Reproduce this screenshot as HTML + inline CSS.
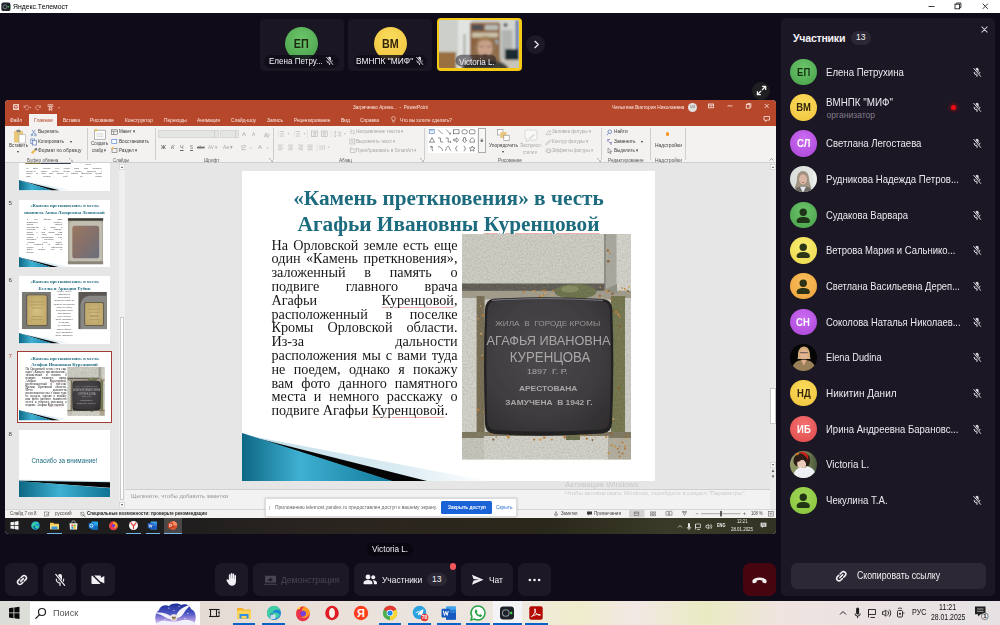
<!DOCTYPE html>
<html lang="ru">
<head>
<meta charset="utf-8">
<title>Яндекс.Телемост</title>
<style>
*{box-sizing:border-box;margin:0;padding:0}
html,body{width:1000px;height:625px;overflow:hidden;background:#0f0b19}
body{position:relative;font-family:"Liberation Sans",sans-serif;color:#fff;-webkit-font-smoothing:antialiased}
.abs{position:absolute}
/* window title bar */
#wtitle{position:absolute;left:0;top:0;width:1000px;height:13px;background:#fff;color:#000;font-size:8px;line-height:13px}
#wtitle .t{position:absolute;left:13px;top:0}
/* tiles */
.tile{position:absolute;top:18.5px;width:84px;height:52px;border-radius:4px;background:#1a1623;overflow:hidden}
.tile .av{position:absolute;left:25.5px;top:8px;width:33px;height:33px;border-radius:50%;font-weight:bold;font-size:12px;line-height:35px;text-align:center;color:#1d2a12}
.tile .lbl{position:absolute;left:4.5px;top:36px;width:75px;height:13px;border-radius:6.5px;background:rgba(16,12,24,.82);font-size:9px;line-height:13px;white-space:nowrap;color:#f1eff4}
.tile .lbl .sx{position:absolute;left:4.7px;top:0}
/* shared screen */
#share{position:absolute;left:5px;top:99.5px;width:771px;height:434.5px;border-radius:4px;overflow:hidden;background:#e6e6e6}
#share>*{filter:blur(.3px)}
/* panel */
#panel{position:absolute;left:781px;top:18px;width:214px;height:578px;border-radius:5px;background:#1b1724}
/* controls */
.cb{position:absolute;top:563px;height:33px;border-radius:7px;background:#1c1826}
/* taskbar */
#tb{position:absolute;left:0;top:600.5px;width:1000px;height:24.5px;background:linear-gradient(90deg,#dbded6 0%,#dcded8 3%,#e4dcd4 20%,#e8dfd8 30%,#ebe4de 42%,#efe9e2 52%,#efedcb 57.5%,#f2e8e4 63.5%,#e9ebc2 70.5%,#f0e4e0 78%,#ebe3e2 85%,#e6e2e4 100%)}

/* participants */
#panel h2{position:absolute;left:12px;top:12.5px;font-size:10.6px;font-weight:bold;line-height:14px;letter-spacing:-.25px;color:#f4f2f7}
#panel .cnt{position:absolute;left:70px;top:13px;width:19.5px;height:13.5px;border-radius:7px;background:#2c2735;font-size:8.6px;line-height:13.5px;text-align:center;color:#f1eff4}
.row{position:absolute;left:0;width:214px;height:27px}
.row .a{position:absolute;left:9.2px;top:0;width:26.5px;height:26.5px;border-radius:50%;font-weight:bold;font-size:11px;line-height:27.5px;text-align:center;overflow:hidden}
.row .a i{display:inline-block;font-style:normal;transform:scaleX(.86)}
.row .n{position:absolute;left:45.4px;top:7px;font-size:10.4px;line-height:14px;color:#ebe9ef;white-space:nowrap}
.row .n2{top:1.5px}
.row .s{position:absolute;left:45.4px;top:14.5px;font-size:8.6px;line-height:12px;color:#817c8b;white-space:nowrap}
.row svg.m{position:absolute;left:191px;top:8px;width:10px;height:11px}
.g1{background:radial-gradient(circle at 50% 35%,#6cc46a,#47a049)}
.y1{background:radial-gradient(circle at 50% 35%,#fbdc5e,#f0c23a)}
.p1{background:radial-gradient(circle at 50% 35%,#cc6cf2,#a945d8)}
.y2{background:radial-gradient(circle at 50% 35%,#f8ec72,#ecd84c)}
.o1{background:radial-gradient(circle at 50% 35%,#f9be5c,#eea23a)}
.r1{background:radial-gradient(circle at 50% 35%,#f47272,#e04848)}
.l1{background:radial-gradient(circle at 50% 35%,#a2d858,#86c23a)}
#copy{position:absolute;left:9.5px;top:545px;width:195.5px;height:26px;border-radius:6px;background:#2d2835;font-size:10px;line-height:26px;color:#f1eff4}

.cb svg{position:absolute}
.cb .tx{position:absolute;top:0;font-size:9.8px;line-height:33px;white-space:nowrap;display:inline-block;transform-origin:0 50%}
#tb .ic{position:absolute;top:3px;width:18px;height:18px}
#tb .ul{position:absolute;top:22.8px;height:1.7px;background:#0a64c8}
.sx{display:inline-block;transform-origin:0 50%;white-space:nowrap}
/*PPTCSS*/
#share{font-family:"Liberation Sans",sans-serif;color:#444}
#share .o{position:absolute;left:0;top:0;width:771px;height:26.1px;background:#b7472a}
#share .t{position:absolute;white-space:nowrap;transform-origin:0 50%}
#share .tab{color:#fbe9e4}
#share .rb{position:absolute;left:0;top:26.1px;width:771px;height:37.1px;background:#f3f2f1;border-bottom:.6px solid #d2d0ce}
#share .rt{color:#3b3a39}
#share .rg{color:#a9a7a5}
#share .gl{color:#5a5856}
#share .sep{position:absolute;top:28.5px;width:.6px;height:31.5px;background:#d0cecc}
#share .th{position:absolute;left:14.2px;width:91px;height:67.5px;background:#fff;overflow:hidden}
#share .th .in{position:absolute;left:0;top:0;width:413px;height:310.5px;transform:scale(.2203,.2174);transform-origin:0 0}
#share .num{position:absolute;left:3.5px;font-size:6.2px;line-height:8px;color:#3f3e3d}
.sl{position:absolute;background:#fff;overflow:hidden;font-family:"Liberation Serif",serif}
.sl .ti{position:absolute;left:0;width:413px;text-align:center;font-weight:bold;font-size:21.3px;line-height:26px;color:#1d6b7e;white-space:nowrap}
.sl .bd{position:absolute;font-size:14.2px;line-height:13.8px;color:#161616}
.sl .bd div{text-align:justify;text-align-last:justify;white-space:nowrap;height:13.8px}
.sl .bd div.l{text-align-last:left}
.sq{text-decoration:underline;text-decoration-color:#eeb0aa;text-decoration-thickness:.6px;text-underline-offset:1.5px}
#share .st{color:#484644}
/*ENDPPTCSS*/
</style>
</head>
<body>
<div id="wtitle"><svg style="position:absolute;left:1px;top:1.500px" width="10" height="10" viewBox="0 0 10 10"><rect x=".3" y=".5" width="9.200" height="8.600" rx="2.200" fill="#1d2228"/><circle cx="4" cy="4.800" r="2" fill="none" stroke="#9aa0a6" stroke-width=".7"/><circle cx="7.300" cy="4.800" r=".8" fill="#3ee04a"/></svg><span class="t"><span class="sx" style="transform:scaleX(.853)">Яндекс.Телемост</span></span><svg style="position:absolute;left:924px;top:0" width="70" height="13" viewBox="0 0 70 13"><g fill="none" stroke="#222" stroke-width=".9"><path d="M4.500 6.500h6"/><rect x="31" y="4.200" width="4.600" height="4.600"/><path d="M32.300 4.200V3h4.600v4.600h-1.300"/><path d="M58.700 3.700l5.200 5.200M63.900 3.700l-5.200 5.200"/></g></svg></div><!--endwt-->

<div class="tile" style="left:259.500px"><div class="av g1"><i style="display:inline-block;font-style:normal;transform:scaleX(.9)">ЕП</i></div><div class="lbl"><span class="sx" style="transform:scaleX(.895)">Елена Петру...</span><svg viewBox="0 0 10 11" width="9" height="10" style="position:absolute;right:5.200px;top:1.500px"><path d="M5 .8a1.6 1.6 0 0 1 1.6 1.6v2.7a1.6 1.6 0 0 1-3.2 0V2.400A1.600 1.600 0 0 1 5 .8z" fill="#e6e3ea"/><path d="M2 4.900a3 3 0 0 0 6 0M5 8v1.900" fill="none" stroke="#e6e3ea" stroke-width="1"/><path d="M1.300 1.300l7.600 8.600" stroke="#14101d" stroke-width="2.200"/><path d="M1.500 1.100l7.400 8.600" stroke="#e6e3ea" stroke-width="1"/></svg></div></div>
<div class="tile" style="left:348px"><div class="av y1" style="color:#33260a"><i style="display:inline-block;font-style:normal;transform:scaleX(.9)">ВМ</i></div><div class="lbl" style="left:6px;width:73px"><span class="sx" style="left:1.500px;transform:scaleX(.93)">ВМНПК "МИФ"</span><svg viewBox="0 0 10 11" width="9" height="10" style="position:absolute;right:3.500px;top:1.500px"><path d="M5 .8a1.6 1.6 0 0 1 1.6 1.6v2.7a1.6 1.6 0 0 1-3.2 0V2.400A1.600 1.600 0 0 1 5 .8z" fill="#e6e3ea"/><path d="M2 4.900a3 3 0 0 0 6 0M5 8v1.900" fill="none" stroke="#e6e3ea" stroke-width="1"/><path d="M1.300 1.300l7.600 8.600" stroke="#14101d" stroke-width="2.200"/><path d="M1.500 1.100l7.400 8.600" stroke="#e6e3ea" stroke-width="1"/></svg></div></div>
<div class="tile" id="vid" style="left:436.500px;top:17.800px;width:85px;height:52.800px;background:#f6c915"><svg style="position:absolute;left:2.400px;top:2.400px" width="80.200" height="48" viewBox="0 0 80.200 48"><defs><filter id="vb" x="-5%" y="-5%" width="110%" height="110%"><feGaussianBlur stdDeviation=".8"/></filter><clipPath id="vc"><rect width="80.200" height="48" rx="1.500"/></clipPath></defs>
<g clip-path="url(#vc)"><rect width="80.200" height="48" fill="#c9cbc6"/><g filter="url(#vb)">
<rect x="-2" y="-2" width="22" height="52" fill="#cdcfca"/><rect x="19" y="-2" width="13" height="52" fill="#e2e4e1"/><rect x="24" y="14" width="3" height="22" fill="#b9bcb8"/>
<rect x="-2" y="32" width="19" height="18" fill="#9a7040"/>
<rect x="31" y="3" width="30" height="34" fill="#8c613c"/><rect x="33" y="5" width="11" height="5" fill="#4a5058"/><rect x="46" y="5" width="13" height="5" fill="#b9bdb6"/><rect x="33" y="12.500" width="26" height="5" fill="#c8c0a8"/><rect x="48" y="20" width="11" height="5.500" fill="#9fb0b8"/><rect x="48" y="27.500" width="11" height="6" fill="#d8d4c8"/>
<rect x="61" y="-2" width="21" height="52" fill="#d3d5cf"/><rect x="62.500" y="10" width="11" height="29" fill="#b1b4b1"/><circle cx="66.500" cy="5" r="2" fill="#444a55"/><rect x="76.800" y="0" width="2.600" height="30" fill="#4a62a0"/>
<rect x="66" y="29" width="14" height="13" fill="#1f2a33"/><rect x="60" y="40" width="22" height="9" fill="#c9c4ba"/>
<path d="M33 50c-1.500-16 0-31 13-33.500 12.500-1 15.500 14 16 33.500z" fill="#8f6e4b"/>
<ellipse cx="46" cy="28" rx="7.600" ry="9.600" fill="#c9a28b"/>
<path d="M38 26c0-6 3.500-9.500 8-9.500s8 3.500 8 9.500c-1.500-4-3.500-5.500-8-5.500s-6.500 1.500-8 5.500z" fill="#a07c54"/>
<path d="M40 26.500h5M47.500 26.500h5" stroke="#6a5448" stroke-width=".8"/>
<ellipse cx="46" cy="35.500" rx="3" ry="1.600" fill="#7a4a44"/>
<path d="M22 50c1-7 9-9.500 24-9.500s22 2.500 24 9.500z" fill="#3f3f3b"/>
</g>
<rect x="16.500" y="34.800" width="41" height="11.800" rx="5.900" fill="#16121e" fill-opacity=".5"/>
</g></svg><div style="position:absolute;left:22.500px;top:37.800px;font-size:9px;line-height:12px;color:#f4f2f6;white-space:nowrap"><span class="sx" style="transform:scaleX(.9)">Victoria L.</span></div></div><!--endvid-->
<div class="abs" style="left:526.200px;top:35.200px;width:19px;height:19px;border-radius:50%;background:#1d1926"><svg viewBox="0 0 10 10" width="9" height="9" style="position:absolute;left:5.500px;top:5px"><path d="M3.300 1.500L7 5 3.300 8.500" fill="none" stroke="#e9e6ee" stroke-width="1.500" stroke-linecap="round" stroke-linejoin="round"/></svg></div>
<div class="abs" style="left:752px;top:81.500px;width:18px;height:18px;border-radius:50%;background:#1f1f21"><svg viewBox="0 0 12 12" width="11" height="11" style="position:absolute;left:3.500px;top:3.500px"><g fill="none" stroke="#f1f1f1" stroke-width="1.400" stroke-linecap="round" stroke-linejoin="round"><path d="M7.200 1.500h3.300v3.300M10.300 1.700L6.900 5.100M4.800 10.500H1.500V7.200M1.700 10.300l3.400-3.400"/></g></svg></div>
<div id="share"><div class="o"></div>
<svg style="position:absolute;left:7.500px;top:4px" width="50" height="7" viewBox="0 0 50 7"><g fill="none" stroke="#fbe9e4" stroke-width=".8"><rect x=".6" y=".6" width="5" height="5"/><path d="M1.800.6v2h2.600v-2M1.800 5.600v-1.600h2.600v1.600"/><path d="M11.500 3.200a2.200 2.200 0 1 1 1 2.300M11 1.400v2h2" stroke-opacity=".55"/><path d="M27 3.200a2.200 2.200 0 1 0-1 2.300M27.500 1.400v2h-2" stroke-opacity=".55"/><path d="M34.600.8h5.600M34.600 2.300h5.600M36 3.800h3M36.200 3.800v2.600l1.300-.8 1.300.8V3.800"/></g><path d="M16.500 3l1 1 1-1z M45 3.300l1 1.200 1-1.200z" fill="#fbe9e4" fill-opacity=".8"/></svg>
<div class="t tab" style="left:348px;top:4.89px;font-size:5.4px;line-height:7.02px;transform:scaleX(0.879);white-space:pre;">Загряченко Арина...  -  PowerPoint</div>
<div class="t tab" style="left:606.6px;top:4.59px;font-size:5.4px;line-height:7.02px;transform:scaleX(0.894);">Чепыгина Виктория Николаевна</div>
<div style="position:absolute;left:683px;top:3px;width:9px;height:9px;border-radius:50%;background:#e3e1e0;font-size:3.800px;line-height:9px;text-align:center;color:#777">ЧВ</div>
<svg style="position:absolute;left:701px;top:2.500px" width="66" height="22" viewBox="0 0 66 22"><g fill="none" stroke="#fbe9e4" stroke-width=".8"><rect x="2.500" y="2" width="5" height="3.800"/><path d="M2.500 3.200h5M4.300 4.300h1.400"/><path d="M21.500 3.900h5"/><rect x="40.300" y="2.600" width="3.600" height="3.600"/><path d="M41.300 2.600v-1h3.600v3.600h-1"/><path d="M58.700 2l4 4M62.700 2l-4 4"/><path d="M58 14.500h5.500v3.600h-2.600l-1.300 1.400v-1.400H58z"/></g></svg>
<div style="position:absolute;left:24px;top:14.600px;width:28px;height:11.700px;background:#f3f2f1"></div>
<div class="t tab" style="left:5.4px;top:17.46px;font-size:5.6px;line-height:7.28px;transform:scaleX(0.872);">Файл</div>
<div class="t tab" style="left:28.6px;top:17.46px;font-size:5.6px;line-height:7.28px;transform:scaleX(0.882);color:#b7472a;">Главная</div>
<div class="t tab" style="left:58px;top:17.46px;font-size:5.6px;line-height:7.28px;transform:scaleX(0.817);">Вставка</div>
<div class="t tab" style="left:85px;top:17.46px;font-size:5.6px;line-height:7.28px;transform:scaleX(0.851);">Рисование</div>
<div class="t tab" style="left:120px;top:17.46px;font-size:5.6px;line-height:7.28px;transform:scaleX(0.877);">Конструктор</div>
<div class="t tab" style="left:158.6px;top:17.46px;font-size:5.6px;line-height:7.28px;transform:scaleX(0.868);">Переходы</div>
<div class="t tab" style="left:192px;top:17.46px;font-size:5.6px;line-height:7.28px;transform:scaleX(0.875);">Анимация</div>
<div class="t tab" style="left:226px;top:17.46px;font-size:5.6px;line-height:7.28px;transform:scaleX(0.861);">Слайд-шоу</div>
<div class="t tab" style="left:262px;top:17.46px;font-size:5.6px;line-height:7.28px;transform:scaleX(0.871);">Запись</div>
<div class="t tab" style="left:288.6px;top:17.46px;font-size:5.6px;line-height:7.28px;transform:scaleX(0.842);">Рецензирование</div>
<div class="t tab" style="left:336px;top:17.46px;font-size:5.6px;line-height:7.28px;transform:scaleX(0.888);">Вид</div>
<div class="t tab" style="left:355px;top:17.46px;font-size:5.6px;line-height:7.28px;transform:scaleX(0.865);">Справка</div>
<div class="t tab" style="left:395px;top:17.46px;font-size:5.6px;line-height:7.28px;transform:scaleX(0.840);">Что вы хотите сделать?</div>
<svg style="position:absolute;left:385.5px;top:16.500px" width="5" height="7" viewBox="0 0 5 7"><path d="M2.500.5a1.900 1.900 0 0 1 1.100 3.400v1H1.400v-1A1.900 1.900 0 0 1 2.500.5zM1.600 6h1.800" fill="none" stroke="#fbe9e4" stroke-width=".6"/></svg>
<div class="rb"></div>
<div class="sep" style="left:82.4px"></div>
<div class="sep" style="left:149.6px"></div>
<div class="sep" style="left:268px"></div>
<div class="sep" style="left:419px"></div>
<div class="sep" style="left:596px"></div>
<div class="sep" style="left:645px"></div>
<div class="sep" style="left:680px"></div>
<svg style="position:absolute;left:8px;top:29.5px" width="14" height="15" viewBox="0 0 14 15"><rect x="1" y="2" width="9" height="11.500" rx=".8" fill="#eac877"/><rect x="3.500" y=".8" width="4" height="2.400" rx=".6" fill="#8a8886"/><path d="M6 5.500h6.500v8.700H6z" fill="#fff" stroke="#9a9896" stroke-width=".5"/></svg>
<div class="t rt" style="left:3.6px;top:42.59px;font-size:5.4px;line-height:7.02px;transform:scaleX(0.830);">Вставить</div>
<div class="t rt" style="left:11.5px;top:49.5px;font-size:4px;line-height:5px">▾</div>
<svg style="position:absolute;left:25px;top:29.0px" width="8" height="26" viewBox="0 0 8 26"><g fill="none" stroke="#5a7fb8" stroke-width=".7"><path d="M2 .8l3.400 4.600M5.400.8L2 5.400"/><circle cx="1.900" cy="6" r=".9"/><circle cx="5.500" cy="6" r=".9"/><rect x=".8" y="10" width="3.800" height="4.600"/><rect x="2.600" y="11.400" width="3.800" height="4.600" fill="#f3f2f1"/></g><path d="M1 23.500l3.200-3 1.500 1.400-3.200 3z" fill="#eab64a"/><path d="M4.400 20.300l1.700-1.500 1.400 1.400-1.600 1.600z" fill="#666"/></svg>
<div class="t rt" style="left:33px;top:28.99px;font-size:5.4px;line-height:7.02px;transform:scaleX(0.858);">Вырезать</div>
<div class="t rt" style="left:33px;top:38.39px;font-size:5.4px;line-height:7.02px;transform:scaleX(0.894);">Копировать</div>
<div class="t rt" style="left:33px;top:47.39px;font-size:5.4px;line-height:7.02px;transform:scaleX(0.900);">Формат по образцу</div>
<div class="t rt" style="left:65px;top:39.5px;font-size:4px;line-height:5px">▾</div>
<div class="t gl" style="left:22px;top:57.12px;font-size:5.2px;line-height:6.76px;transform:scaleX(0.889);">Буфер обмена</div>
<svg style="position:absolute;left:88.5px;top:29.0px" width="12" height="11" viewBox="0 0 12 11"><rect x=".6" y="1.200" width="10.800" height="9" fill="#fff" stroke="#8a8886" stroke-width=".6"/><rect x=".6" y="0" width="3" height="2.400" fill="#eac877"/><path d="M2.400 4.400h7.200M2.400 6h7.200M2.400 7.600h7.200" stroke="#c8c6c4" stroke-width=".6"/></svg>
<div class="t rt" style="left:86.4px;top:40.59px;font-size:5.4px;line-height:7.02px;transform:scaleX(0.838);">Создать</div>
<div class="t rt" style="left:87.4px;top:47.99px;font-size:5.4px;line-height:7.02px;transform:scaleX(0.739);">слайд ▾</div>
<svg style="position:absolute;left:106px;top:29.0px" width="7" height="26" viewBox="0 0 7 26"><g fill="none" stroke="#6a6866" stroke-width=".6"><rect x=".5" y=".8" width="5.800" height="4.600"/><path d="M.5 2.300h5.800M2.600 2.300v3.100"/><rect x=".8" y="10.300" width="5" height="4" fill="#fff" stroke="#3c78c8"/><rect x="1" y="19.300" width="5" height="4.300"/></g><rect x=".5" y="18.400" width="2.400" height="1.800" fill="#eab64a"/></svg>
<div class="t rt" style="left:114px;top:28.99px;font-size:5.4px;line-height:7.02px;transform:scaleX(0.835);">Макет ▾</div>
<div class="t rt" style="left:114px;top:38.39px;font-size:5.4px;line-height:7.02px;transform:scaleX(0.868);">Восстановить</div>
<div class="t rt" style="left:114px;top:47.39px;font-size:5.4px;line-height:7.02px;transform:scaleX(0.829);">Раздел ▾</div>
<div class="t gl" style="left:108.4px;top:57.12px;font-size:5.2px;line-height:6.76px;transform:scaleX(0.837);">Слайды</div>
<div style="position:absolute;left:153.4px;top:30.9px;width:60.600px;height:8px;background:#e4e6e3;border:.5px solid #d6d6d4"></div>
<div style="position:absolute;left:215px;top:30.9px;width:19px;height:8px;background:#e4e6e3;border:.5px solid #d6d6d4"></div>
<div style="position:absolute;left:208.5px;top:30.9px;width:.5px;height:8px;background:#cfcfcd"></div><div style="position:absolute;left:229.5px;top:30.9px;width:.5px;height:8px;background:#cfcfcd"></div>
<div class="t rg" style="left:237px;top:31.73px;font-size:5.8px;line-height:7.54px;transform:scaleX(1.034);">A</div>
<div class="t rg" style="left:247.4px;top:32.78px;font-size:4.8px;line-height:6.24px;transform:scaleX(0.999);">A</div>
<svg style="position:absolute;left:257.5px;top:32.0px" width="7" height="7" viewBox="0 0 7 7"><path d="M1 5.500L3 1l2 4.500M1.700 4h2.600M4.600 1.200l1.800 1.800-2.500 2.500" fill="none" stroke="#a9a7a5" stroke-width=".6"/></svg>
<div class="t rt" style="left:155.6px;top:44.26px;font-size:5.6px;line-height:7.28px;font-weight:bold;transform:scaleX(0.948);color:#6e6c6a;">Ж</div>
<div class="t rt" style="left:165.6px;top:44.26px;font-size:5.6px;line-height:7.28px;transform:scaleX(1.042);font-style:italic;color:#6e6c6a;">К</div>
<div class="t rt" style="left:175px;top:44.26px;font-size:5.6px;line-height:7.28px;transform:scaleX(0.965);text-decoration:underline;color:#6e6c6a;">Ч</div>
<div class="t rt" style="left:185px;top:44.26px;font-size:5.6px;line-height:7.28px;transform:scaleX(0.803);text-decoration:underline;color:#6e6c6a;">S</div>
<div class="t rt" style="left:192.4px;top:44.26px;font-size:5.6px;line-height:7.28px;transform:scaleX(0.842);text-decoration:line-through;color:#6e6c6a;">abc</div>
<div class="t rg" style="left:202.6px;top:44.92px;font-size:5.2px;line-height:6.76px;transform:scaleX(0.874);">AV ▾</div>
<div class="t rg" style="left:217.6px;top:44.66px;font-size:5.6px;line-height:7.28px;transform:scaleX(0.873);">Aa ▾</div>
<svg style="position:absolute;left:235px;top:44.5px" width="36" height="7" viewBox="0 0 36 7"><path d="M1.500 2l3.500-1 .8 1.500-3.300 2.200zM1 5.800h5" fill="none" stroke="#a9a7a5" stroke-width=".6"/><path d="M9.600 3.400l1 1.200 1-1.200zM26.600 3.400l1 1.200 1-1.200z" fill="#a9a7a5"/></svg>
<div class="t rg" style="left:253.4px;top:44.40px;font-size:6px;line-height:7.8px;transform:scaleX(0.999);">A</div>
<div class="t gl" style="left:198.6px;top:57.12px;font-size:5.2px;line-height:6.76px;transform:scaleX(0.900);">Шрифт</div>
<svg style="position:absolute;left:272px;top:30.5px" width="74" height="24" viewBox="0 0 74 24"><g stroke="#b4b2b0" stroke-width=".6" fill="none"><path d="M3 1.500h4M3 3.800h4M3 6.100h4M1.200 1.500h.8M1.200 3.800h.8M1.200 6.100h.8"/><path d="M19 1.500h4M19 3.800h4M19 6.100h4M17.200 1.500h.8M17.200 3.800h.8M17.200 6.100h.8"/><rect x="34.600" y="1" width="5.600" height="5.400"/><path d="M36.200 2.500h3M36.200 3.800h3M36.200 5.100h3"/><rect x="44.600" y="1" width="5.600" height="5.400"/><path d="M45.800 2.500h3M45.800 3.800h3M45.800 5.100h3"/><path d="M58.200 1.200v5.600M57 2.400l1.200-1.200 1.200 1.200M57 5.600l1.200 1.200 1.200-1.200M61 2.200h3.400M61 4h3.400M61 5.800h3.400"/><path d="M1.200 15h5M1.200 16.600h3.600M1.200 18.200h5M1.200 19.800h3.600"/><path d="M11 15h5M11.700 16.600h3.600M11 18.200h5M11.700 19.800h3.600"/><path d="M21 15h5M22.400 16.600h3.600M21 18.200h5M22.400 19.800h3.600"/><path d="M30.600 15h5M30.600 16.600h5M30.600 18.200h5M30.600 19.800h5"/><path d="M43 15v5M45.200 15v5M47.400 15v5"/></g><g fill="#b4b2b0"><path d="M10.500 3.300l1 1.200 1-1.200zM26.500 3.300l1 1.200 1-1.200zM66.800 3.300l1 1.200 1-1.200zM50.600 16.800l1 1.200 1-1.200z"/></g><path d="M30.400 0v8M54.200 0v8M40 13.500v8" stroke="#d8d6d4" stroke-width=".5"/></svg>
<svg style="position:absolute;left:343.5px;top:29.5px" width="7" height="25" viewBox="0 0 7 25"><g fill="none" stroke="#b4b2b0" stroke-width=".6"><path d="M1 1h2.400M1 2.600h2.400M1 4.200h2.400M5 .8v4.400M4.200 4.400l.8.900.8-.9"/><rect x=".8" y="10" width="5" height="5"/><path d="M2 11.600h2.600M2 13.200h2.600"/><rect x="1.200" y="20" width="4.800" height="3.600"/><path d="M.6 19h2.600"/></g></svg>
<div class="t rg" style="left:351px;top:28.99px;font-size:5.4px;line-height:7.02px;transform:scaleX(0.864);">Направление текста ▾</div>
<div class="t rg" style="left:351px;top:38.39px;font-size:5.4px;line-height:7.02px;transform:scaleX(0.861);">Выровнять текст ▾</div>
<div class="t rg" style="left:351px;top:47.39px;font-size:5.4px;line-height:7.02px;transform:scaleX(0.873);">Преобразовать в SmartArt ▾</div>
<div class="t gl" style="left:334px;top:57.12px;font-size:5.2px;line-height:6.76px;transform:scaleX(0.891);">Абзац</div>
<div style="position:absolute;left:423.4px;top:28.9px;width:48.600px;height:24.600px;background:#fff"></div>
<div style="position:absolute;left:472.6px;top:28.9px;width:8.800px;height:24.600px;background:#f6f6f5;border:.5px solid #aeacaa"></div>
<svg style="position:absolute;left:423.4px;top:28.9px" width="58" height="25" viewBox="0 0 58 25"><g fill="none" stroke="#4a4846" stroke-width=".6"><rect x="1.200" y="1.500" width="5" height="4" stroke="#3a6ec0"/><path d="M2.200 2.800h3" stroke="#3a6ec0"/><path d="M10 1.500l4.600 4.600M18 1.500l4.600 4.600M22.600 6.100v-1.400M22.600 6.100h-1.400"/><rect x="25.400" y="1.800" width="5.600" height="4"/><ellipse cx="36.600" cy="3.800" rx="2.800" ry="2.200"/><rect x="41.400" y="1.800" width="5.600" height="4" rx="1"/><path d="M4 9.600l2.600 4.600H1.400z"/><path d="M10 10h2.600v4h2.600M17.600 10h2.600v4h2.600M22 13.200l.9.800-.9.800"/><path d="M25.600 11.200h2.800v-1.400l2.400 2.200-2.400 2.200v-1.400h-2.800z"/><path d="M35.600 9.600h2v2.600h1.300l-2.300 2.400-2.300-2.400h1.300z"/><path d="M42 14.200v-2.600l2.200-2 2.200 2v2.600z"/><path d="M2.600 18.200l2 .6-.6 2 .8 2.400M2.600 18.200l.6 2"/><path d="M10 18.600c2.600 0 4.600 2 4.600 4.400M17.400 22.800c1.200-4 2-4.600 2.800-4.600s1.600 4.600 3 4.600"/><path d="M29.400 18.200c-1 0-1.200.6-1.200 1.200s.2 1-.8 1.200c1 .2.800.6.800 1.200s.2 1.200 1.200 1.200M35.600 18.200c1 0 1.200.6 1.200 1.200s-.2 1 .8 1.200c-1 .2-.8.600-.8 1.200s-.2 1.200-1.200 1.200"/><path d="M44.200 18l.8 1.800 2 .2-1.500 1.300.5 1.900-1.800-1-1.800 1 .5-1.900-1.500-1.300 2-.2z"/></g><path d="M52.600 11.200h2.400M52.600 12.600l1.200 1.400 1.200-1.400z" stroke="#4a4846" stroke-width=".5" fill="#4a4846"/></svg>
<svg style="position:absolute;left:492px;top:29.0px" width="13" height="12" viewBox="0 0 13 12"><rect x=".6" y=".6" width="5.400" height="5.400" fill="#fff" stroke="#8a8886" stroke-width=".6"/><rect x="3.400" y="3" width="6" height="6" fill="#eac877"/><rect x="6.800" y="6.200" width="5.400" height="5.400" fill="#fff" stroke="#8a8886" stroke-width=".6"/></svg>
<div class="t rt" style="left:484px;top:42.59px;font-size:5.4px;line-height:7.02px;transform:scaleX(0.902);">Упорядочить</div>
<div class="t rt" style="left:497px;top:49.5px;font-size:4px;line-height:5px">▾</div>
<svg style="position:absolute;left:519px;top:29.0px" width="14" height="13" viewBox="0 0 14 13"><path d="M3 1h8a2 2 0 0 1 2 2v6a2 2 0 0 1-2 2H6l-4 1.500L3 10a2 2 0 0 1-2-2V3a2 2 0 0 1 2-2z" fill="#f8f8f7" stroke="#c8c6c4" stroke-width=".6"/><path d="M5 9l5-4 .8 1-5 4-1.600.6z" fill="#d6d4d2"/></svg>
<div class="t rg" style="left:515px;top:42.59px;font-size:5.4px;line-height:7.02px;transform:scaleX(0.891);">Экспресс-</div>
<div class="t rg" style="left:518.4px;top:49.39px;font-size:5.4px;line-height:7.02px;transform:scaleX(0.764);">стили ▾</div>
<svg style="position:absolute;left:540px;top:29.0px" width="7" height="25" viewBox="0 0 7 25"><g fill="none" stroke="#b4b2b0" stroke-width=".6"><path d="M1 5.600l2.500-4 2.500 4zM5 1l1 1.600"/><path d="M1 14.500l4.400-3.600.8.900-4.400 3.600-1.200.3z"/><ellipse cx="3.400" cy="21.600" rx="2.600" ry="2"/><ellipse cx="4" cy="22.200" rx="2" ry="1.400"/></g></svg>
<div class="t rg" style="left:547.4px;top:28.99px;font-size:5.4px;line-height:7.02px;transform:scaleX(0.868);">Заливка фигуры ▾</div>
<div class="t rg" style="left:547.4px;top:38.39px;font-size:5.4px;line-height:7.02px;transform:scaleX(0.868);">Контур фигуры ▾</div>
<div class="t rg" style="left:547.4px;top:47.39px;font-size:5.4px;line-height:7.02px;transform:scaleX(0.843);">Эффекты фигуры ▾</div>
<div class="t gl" style="left:493px;top:57.12px;font-size:5.2px;line-height:6.76px;transform:scaleX(0.916);">Рисование</div>
<svg style="position:absolute;left:601px;top:29.0px" width="7" height="25" viewBox="0 0 7 25"><g fill="none" stroke="#4a6fb0" stroke-width=".7"><circle cx="3.800" cy="2.800" r="1.800"/><path d="M2.500 4.200L.8 6.200"/><path d="M1 10.600h3M1 12h2M3 13.600h3M4 15h2" stroke="#6a5fa8"/><path d="M2 19l0 5 1.300-1.200 1 2 .8-.4-1-2h1.700z" stroke="#5a5856" stroke-width=".5"/></g></svg>
<div class="t rt" style="left:609px;top:28.99px;font-size:5.4px;line-height:7.02px;transform:scaleX(0.883);">Найти</div>
<div class="t rt" style="left:609px;top:38.39px;font-size:5.4px;line-height:7.02px;transform:scaleX(0.890);">Заменить</div>
<div class="t rt" style="left:609px;top:47.39px;font-size:5.4px;line-height:7.02px;transform:scaleX(0.840);">Выделить ▾</div>
<div class="t rt" style="left:636px;top:39.5px;font-size:4px;line-height:5px">▾</div>
<div class="t gl" style="left:603.4px;top:57.12px;font-size:5.2px;line-height:6.76px;transform:scaleX(0.899);">Редактирование</div>
<div style="position:absolute;left:660.8px;top:32.7px;width:3.600px;height:3.600px;border-radius:50%;background:#f7941d"></div>
<div class="t rt" style="left:650px;top:42.59px;font-size:5.4px;line-height:7.02px;transform:scaleX(0.911);">Надстройки</div>
<div class="t gl" style="left:650px;top:57.12px;font-size:5.2px;line-height:6.76px;transform:scaleX(0.946);">Надстройки</div>
<svg style="position:absolute;left:63.5px;top:58.0px" width="4" height="4" viewBox="0 0 4 4"><path d="M.4 1.600V.4h1.200M1.600 1.600l2 2M3.600 2.200v1.400H2.200" fill="none" stroke="#8a8886" stroke-width=".5"/></svg>
<svg style="position:absolute;left:263.5px;top:58.0px" width="4" height="4" viewBox="0 0 4 4"><path d="M.4 1.600V.4h1.200M1.600 1.600l2 2M3.600 2.200v1.400H2.200" fill="none" stroke="#8a8886" stroke-width=".5"/></svg>
<svg style="position:absolute;left:414.5px;top:58.0px" width="4" height="4" viewBox="0 0 4 4"><path d="M.4 1.600V.4h1.200M1.600 1.600l2 2M3.600 2.200v1.400H2.200" fill="none" stroke="#8a8886" stroke-width=".5"/></svg>
<svg style="position:absolute;left:592px;top:58.0px" width="4" height="4" viewBox="0 0 4 4"><path d="M.4 1.600V.4h1.200M1.600 1.600l2 2M3.600 2.200v1.400H2.200" fill="none" stroke="#8a8886" stroke-width=".5"/></svg>
<svg style="position:absolute;left:763.5px;top:58.3px" width="5" height="3" viewBox="0 0 5 3"><path d="M.5 2.500l2-2 2 2" fill="none" stroke="#6a6866" stroke-width=".6"/></svg>
<div style="position:absolute;left:113.500px;top:63.200px;width:6.500px;height:346.500px;background:#efefef"></div>
<div style="position:absolute;left:114.700px;top:217.5px;width:4.600px;height:183px;background:#fff;border:.5px solid #c9c9c9"></div>
<svg style="position:absolute;left:113.6px;top:64.1px" width="6" height="6" viewBox="0 0 6 6"><rect x=".3" y=".3" width="5.400" height="5.400" fill="#fff" stroke="#b9b9b9" stroke-width=".5"/><path d="M1.800 3.700L3 2.300l1.200 1.400z" fill="#333"/></svg>
<svg style="position:absolute;left:113.6px;top:402.8px" width="6" height="6" viewBox="0 0 6 6"><rect x=".3" y=".3" width="5.400" height="5.400" fill="#fff" stroke="#b9b9b9" stroke-width=".5"/><path d="M1.800 2.300L3 3.700l1.200-1.400z" fill="#333"/></svg>
<div style="position:absolute;left:0;top:63.200px;width:113.500px;height:346.500px;background:#e6e6e6;overflow:hidden">
<div class="th sl" style="top:-39.7px"><div class="in"><div style="position:absolute;left:30px;top:170px;width:205px;height:18px;background:#1a2340"></div><div style="position:absolute;left:30px;top:170px;width:70px;height:18px;background:#8c7a3a"></div><div class="bd" style="left:250px;top:176px;width:130px;font-size:7.4px;line-height:8.5px;color:#111"><div style="height:8.5px;text-align:center;text-align-last:center">для возложения и для</div><div style="height:8.5px;text-align:center;text-align-last:center">галереи.</div></div><div class="bd" style="left:32px;top:204px;width:345px;font-size:7.6px;line-height:11.5px;color:#111"><div style="height:11.5px;">Тот камень установлен перед каждым домом, жизнь вписывается,</div><div style="height:11.5px;">используется гравюра латунная богемия пластина, вмещающая в</div><div style="height:11.5px;">гранитик так имена жизнь записаны и любимый общеизвестная подлинно</div><div style="height:11.5px;">домов, контактам погиб или сохранна.</div></div><svg style="position:absolute;left:0;top:262.0px" width="413" height="48.5" viewBox="0 0 413 48.5" preserveAspectRatio="none">
<defs><linearGradient id="sgt4" x1="0" x2="1" y1="0" y2="0"><stop offset="0" stop-color="#0d6784"/><stop offset=".38" stop-color="#3fb0d2"/><stop offset="1" stop-color="#12799a"/></linearGradient>
<linearGradient id="lgt4" x1="0" x2="1" y1="0" y2="0"><stop offset="0" stop-color="#c3dfea"/><stop offset=".6" stop-color="#d9ebf2"/><stop offset="1" stop-color="#ffffff"/></linearGradient></defs>
<path d="M10 3.200L248 48.500H150z" fill="url(#lgt4)"/>
<path d="M14 5L187 48.500H150z" fill="#050505"/>
<path d="M0 0L152 48.500H0z" fill="url(#sgt4)"/>
</svg></div></div>
<div class="num" style="top:36.3px">5</div><div class="th sl" style="top:37.3px"><div class="in"><div class="ti" style="top:12px">«Камень преткновения» в честь</div><div class="ti" style="top:43px;font-size:20.700px">пианиста Анны Лазаревны Левинской</div><div class="bd" style="left:35px;top:86px;width:161px;font-size:8.8px;line-height:11.4px;color:#111"><div style="height:11.4px;">У этих обычных домов</div><div style="height:11.4px;">вспоминаний «Камень»,</div><div style="height:11.4px;">жизнью «Камень</div><div style="height:11.4px;">преткновения» в память о</div><div style="height:11.4px;">Левинской Анне Лазаревне,</div><div style="height:11.4px;">которая в 1874 прожив этом</div><div style="height:11.4px;">районом улице, создания</div><div style="height:11.4px;">прошла в консерватории. Была</div><div style="height:11.4px;">арестована. Левинскую с</div><div style="height:11.4px;">Гулярной гетто, позднее</div><div style="height:11.4px;">её Литовскую на поблизи</div><div style="height:11.4px;">рудники и собственным</div><div style="height:11.4px;">хозяин которых они не</div><div style="height:11.4px;">брились.</div></div><svg style="position:absolute;left:222px;top:84px" width="160" height="212" viewBox="0 0 160 212"><defs><filter id="s5"><feGaussianBlur stdDeviation="3"/></filter><linearGradient id="s5g" x1="0" y1="0" x2="1" y2="1"><stop offset="0" stop-color="#9a7660"/><stop offset=".5" stop-color="#85706a"/><stop offset="1" stop-color="#69707e"/></linearGradient></defs><rect width="160" height="212" fill="#aeaa9e"/><g filter="url(#s5)"><rect x="-5" y="-5" width="170" height="16" fill="#3a3a30"/><rect x="8" y="14" width="146" height="186" rx="16" fill="#c2beb2"/><rect x="20" y="34" width="122" height="150" rx="12" fill="url(#s5g)"/><rect x="-5" y="198" width="170" height="20" fill="#8a867a"/></g></svg><svg style="position:absolute;left:0;top:262.0px" width="413" height="48.5" viewBox="0 0 413 48.5" preserveAspectRatio="none">
<defs><linearGradient id="sgt5" x1="0" x2="1" y1="0" y2="0"><stop offset="0" stop-color="#0d6784"/><stop offset=".38" stop-color="#3fb0d2"/><stop offset="1" stop-color="#12799a"/></linearGradient>
<linearGradient id="lgt5" x1="0" x2="1" y1="0" y2="0"><stop offset="0" stop-color="#c3dfea"/><stop offset=".6" stop-color="#d9ebf2"/><stop offset="1" stop-color="#ffffff"/></linearGradient></defs>
<path d="M10 3.200L248 48.500H150z" fill="url(#lgt5)"/>
<path d="M14 5L187 48.500H150z" fill="#050505"/>
<path d="M0 0L152 48.500H0z" fill="url(#sgt5)"/>
</svg></div></div>
<div class="num" style="top:113.3px">6</div><div class="th sl" style="top:113.8px"><div class="in"><div class="ti" style="top:12px">«Камень преткновения» в честь</div><div class="ti" style="top:43px">Беллы и Аркадия Рубин</div><svg style="position:absolute;left:13px;top:73px" width="132" height="172" viewBox="0 0 132 172"><defs><filter id="s6a"><feGaussianBlur stdDeviation="2.500"/></filter><radialGradient id="s6ag"><stop offset="0" stop-color="#d6c082"/><stop offset="1" stop-color="#c2aa6a"/></radialGradient></defs><rect width="132" height="172" fill="#7b7973"/><g filter="url(#s6a)"><rect x="21" y="13" width="95" height="144" rx="9" fill="#4a4742"/><rect x="24" y="16" width="89" height="138" rx="7" fill="url(#s6ag)"/><path d="M38 46h61M38 60h61M44 74h49M46 114h45M42 128h53" stroke="#a08c56" stroke-width="4" fill="none" opacity=".7"/></g></svg><svg style="position:absolute;left:269px;top:73px" width="130" height="172" viewBox="0 0 130 172"><defs><filter id="s6b"><feGaussianBlur stdDeviation="2.500"/></filter><radialGradient id="s6bg"><stop offset="0" stop-color="#d2bc80"/><stop offset="1" stop-color="#bfa86c"/></radialGradient></defs><rect width="130" height="172" fill="#5a5753"/><g filter="url(#s6b)"><path d="M10 172V60Q14 22 50 18H130V172z" fill="#8a8884"/><rect x="28" y="47" width="88" height="110" rx="9" fill="#4a4742"/><rect x="31" y="50" width="82" height="104" rx="7" fill="url(#s6bg)"/><path d="M45 80h54M45 94h54M51 108h42M53 114h38M49 128h46" stroke="#a08c56" stroke-width="4" fill="none" opacity=".7"/></g></svg><div class="bd" style="left:146px;top:64px;width:118px;font-size:9.2px;line-height:14.4px;color:#111"><div style="height:14.4px;text-align:center;text-align-last:center">Следует, что и её</div><div style="height:14.4px;text-align:center;text-align-last:center">проживали во</div><div style="height:14.4px;text-align:center;text-align-last:center">преткновения,</div><div style="height:14.4px;text-align:center;text-align-last:center">заложенные памяти во</div><div style="height:14.4px;text-align:center;text-align-last:center">время всё преткновения</div><div style="height:14.4px;text-align:center;text-align-last:center">плитой от Рубина,</div><div style="height:14.4px;text-align:center;text-align-last:center">в следствии тройка</div><div style="height:14.4px;text-align:center;text-align-last:center">своих Иванной</div><div style="height:14.4px;text-align:center;text-align-last:center">Отдел пыльной</div><div style="height:14.4px;text-align:center;text-align-last:center">войны. Проживших</div><div style="height:14.4px;text-align:center;text-align-last:center">в этом доме,</div><div style="height:14.4px;text-align:center;text-align-last:center">где установлен</div><div style="height:14.4px;text-align:center;text-align-last:center">камень Рубиных.</div><div style="height:14.4px;text-align:center;text-align-last:center">Отдел Московский</div><div style="height:14.4px;text-align:center;text-align-last:center">войны. Проживших.</div></div><svg style="position:absolute;left:0;top:262.0px" width="413" height="48.5" viewBox="0 0 413 48.5" preserveAspectRatio="none">
<defs><linearGradient id="sgt6" x1="0" x2="1" y1="0" y2="0"><stop offset="0" stop-color="#0d6784"/><stop offset=".38" stop-color="#3fb0d2"/><stop offset="1" stop-color="#12799a"/></linearGradient>
<linearGradient id="lgt6" x1="0" x2="1" y1="0" y2="0"><stop offset="0" stop-color="#c3dfea"/><stop offset=".6" stop-color="#d9ebf2"/><stop offset="1" stop-color="#ffffff"/></linearGradient></defs>
<path d="M10 3.200L248 48.500H150z" fill="url(#lgt6)"/>
<path d="M14 5L187 48.500H150z" fill="#050505"/>
<path d="M0 0L152 48.500H0z" fill="url(#sgt6)"/>
</svg></div></div>
<div class="num" style="top:189.3px;color:#b7472a">7</div><div style="position:absolute;left:12.400px;top:188.7px;width:94.600px;height:71.200px;border:1px solid #a33a34;background:#fff"></div><div class="th sl" style="top:190.5px"><div class="in"><div class="ti" style="top:14px">«Камень преткновения» в честь</div><div class="ti" style="top:40px">Агафьи Ивановны <span class="sq">Куренцовой</span></div><div class="bd" style="left:29.500px;top:68.200px;width:186px"><div>На Орловской земле есть еще</div><div>один «Камень преткновения»,</div><div>заложенный в память о</div><div>подвиге главного врача</div><div>Агафьи <span class="sq">Куренцовой</span>,</div><div>расположенный в поселке</div><div>Кромы Орловской области.</div><div>Из-за дальности</div><div>расположения мы с вами туда</div><div>не поедем, однако я покажу</div><div>вам фото данного памятного</div><div>места и немного расскажу о</div><div class="l">подвиге Агафьи <span class="sq">Куренцовой</span>.</div></div><svg style="position:absolute;left:220px;top:63.500px" width="169" height="225.500" viewBox="0 0 169 225.500">
<defs><filter id="pbm" x="-5%" y="-5%" width="110%" height="110%"><feGaussianBlur stdDeviation=".7"/></filter><filter id="pb2m"><feGaussianBlur stdDeviation=".45"/></filter>
<filter id="pnm" x="0" y="0" width="100%" height="100%"><feTurbulence type="fractalNoise" baseFrequency=".6" numOctaves="2" seed="4"/><feColorMatrix values="0 0 0 0 .3  0 0 0 0 .3  0 0 0 0 .27  .9 .9 .9 0 -1.150"/></filter>
<radialGradient id="plm" cx=".45" cy=".4" r=".75"><stop offset="0" stop-color="#4c494c"/><stop offset=".6" stop-color="#403d40"/><stop offset="1" stop-color="#302e30"/></radialGradient>
<clipPath id="pcm"><rect width="169" height="225.500"/></clipPath></defs>
<g clip-path="url(#pcm)">
<rect width="169" height="225.500" fill="#cdcdc4"/>
<g filter="url(#pbm)">
<rect x="-4" y="-4" width="148" height="56" fill="#cecec5"/>
<rect x="142" y="-4" width="13" height="64" fill="#a9a99f"/><rect x="142" y="-4" width="2" height="60" fill="#8e8e84"/>
<rect x="154.500" y="-4" width="20" height="62" fill="#d4d4cc"/>
<rect x="-4" y="49.500" width="146.500" height="7.800" fill="#5b5951"/>
<rect x="-4" y="56.800" width="180" height="8.500" fill="#a29c8b"/>
<path d="M142 56l13-6v10z" fill="#8f8f82"/>
<rect x="-4" y="64" width="19" height="140" fill="#d3d3cb"/>
<rect x="14.600" y="62" width="8" height="142" fill="#74694f"/>
<rect x="149" y="62" width="14.500" height="142" fill="#70734a"/>
<rect x="163" y="64" width="10" height="140" fill="#cfcfc7"/>
<ellipse cx="113.500" cy="57.500" rx="21" ry="7.500" fill="#6b6f47"/><ellipse cx="108" cy="55" rx="9" ry="3.500" fill="#858a5c"/>
<rect x="-4" y="198" width="180" height="9" fill="#7d745c"/>
<rect x="-4" y="204" width="27" height="24" fill="#c6c6bd"/>
<rect x="22" y="202" width="124.500" height="26" fill="#d2d2ca"/>
<rect x="146" y="204" width="26" height="24" fill="#b3ae9d"/>
<rect x="104" y="198" width="14" height="8" fill="#6a6d49"/>
<circle cx="72.3" cy="57.1" r="1.1" fill="#c98a3e"/><circle cx="91.2" cy="56.7" r="1.0" fill="#b8742e"/><circle cx="61.4" cy="59.0" r="0.6" fill="#c98a3e"/><circle cx="80.9" cy="56.4" r="1.0" fill="#b8742e"/><circle cx="84.0" cy="60.1" r="0.6" fill="#8a5a2a"/><circle cx="61.9" cy="57.5" r="1.0" fill="#b8742e"/><circle cx="71.0" cy="57.0" r="0.7" fill="#d9a455"/><circle cx="81.3" cy="60.8" r="0.7" fill="#b8742e"/><circle cx="74.2" cy="59.8" r="0.6" fill="#c98a3e"/><circle cx="83.5" cy="59.5" r="1.0" fill="#d9a455"/><circle cx="77.7" cy="62.5" r="0.9" fill="#b8742e"/><circle cx="90.2" cy="60.9" r="0.8" fill="#d9a455"/><circle cx="80.0" cy="62.1" r="1.1" fill="#d9a455"/><circle cx="83.1" cy="56.5" r="1.0" fill="#b8742e"/><circle cx="160.2" cy="54.1" r="0.9" fill="#c98a3e"/><circle cx="166.8" cy="53.1" r="1.0" fill="#d9a455"/><circle cx="146.9" cy="56.9" r="0.9" fill="#8a5a2a"/><circle cx="138.2" cy="53.3" r="0.8" fill="#c98a3e"/><circle cx="137.9" cy="61.8" r="1.1" fill="#8a5a2a"/><circle cx="145.1" cy="57.4" r="1.1" fill="#c98a3e"/><circle cx="166.1" cy="57.0" r="1.0" fill="#8a5a2a"/><circle cx="137.9" cy="62.8" r="0.7" fill="#b8742e"/><circle cx="148.7" cy="64.8" r="0.9" fill="#b8742e"/><circle cx="150.4" cy="59.7" r="1.2" fill="#8a5a2a"/><circle cx="163.6" cy="55.9" r="0.9" fill="#d9a455"/><circle cx="157.8" cy="57.3" r="0.8" fill="#c98a3e"/><circle cx="141.6" cy="55.2" r="0.8" fill="#8a5a2a"/><circle cx="162.6" cy="54.6" r="0.8" fill="#b8742e"/><circle cx="145.9" cy="16.1" r="1.0" fill="#b8742e"/><circle cx="147.8" cy="19.3" r="1.0" fill="#c98a3e"/><circle cx="146.2" cy="27.2" r="1.3" fill="#8a5a2a"/><circle cx="145.8" cy="16.7" r="0.9" fill="#8a5a2a"/><circle cx="28.1" cy="199.5" r="0.7" fill="#b8742e"/><circle cx="34.3" cy="203.2" r="0.7" fill="#b8742e"/><circle cx="89.8" cy="205.6" r="1.0" fill="#c98a3e"/><circle cx="133.7" cy="203.3" r="0.7" fill="#d9a455"/><circle cx="144.2" cy="203.2" r="0.9" fill="#c98a3e"/><circle cx="130.4" cy="206.0" r="0.9" fill="#8a5a2a"/><circle cx="60.5" cy="200.0" r="1.1" fill="#d9a455"/><circle cx="82.2" cy="203.8" r="1.0" fill="#b8742e"/><circle cx="143.6" cy="202.7" r="0.7" fill="#c98a3e"/><circle cx="118.6" cy="201.1" r="1.1" fill="#c98a3e"/><circle cx="110.5" cy="200.8" r="0.9" fill="#b8742e"/><circle cx="66.2" cy="200.6" r="1.0" fill="#d9a455"/><circle cx="102.7" cy="203.3" r="1.2" fill="#b8742e"/><circle cx="124.8" cy="204.7" r="1.1" fill="#b8742e"/><circle cx="46.0" cy="202.4" r="1.1" fill="#c98a3e"/><circle cx="122.7" cy="202.3" r="0.7" fill="#d9a455"/><circle cx="78.1" cy="205.6" r="1.3" fill="#d9a455"/><circle cx="30.5" cy="199.7" r="0.9" fill="#d9a455"/><circle cx="46.6" cy="203.4" r="1.2" fill="#c98a3e"/><circle cx="82.3" cy="203.6" r="1.2" fill="#c98a3e"/><circle cx="128.5" cy="199.8" r="0.9" fill="#b8742e"/><circle cx="82.1" cy="200.2" r="1.2" fill="#d9a455"/><circle cx="31.3" cy="205.6" r="1.1" fill="#8a5a2a"/><circle cx="72.2" cy="205.6" r="1.1" fill="#b8742e"/><circle cx="149.1" cy="199.2" r="1.0" fill="#8a5a2a"/><circle cx="124.8" cy="200.0" r="1.2" fill="#8a5a2a"/><circle cx="160.5" cy="208.4" r="1.0" fill="#b8742e"/><circle cx="146.5" cy="219.2" r="1.1" fill="#c98a3e"/><circle cx="157.6" cy="222.4" r="0.9" fill="#b8742e"/><circle cx="164.2" cy="205.1" r="0.8" fill="#d9a455"/><circle cx="157.0" cy="218.3" r="0.8" fill="#8a5a2a"/><circle cx="164.4" cy="201.5" r="1.1" fill="#8a5a2a"/><circle cx="160.6" cy="219.6" r="1.0" fill="#b8742e"/><circle cx="157.7" cy="212.6" r="0.6" fill="#8a5a2a"/><circle cx="163.1" cy="214.6" r="1.1" fill="#b8742e"/><circle cx="149.8" cy="211.4" r="1.1" fill="#c98a3e"/><circle cx="153.2" cy="212.4" r="1.0" fill="#c98a3e"/><circle cx="165.4" cy="201.4" r="0.7" fill="#c98a3e"/><circle cx="163.0" cy="212.2" r="1.0" fill="#c98a3e"/><circle cx="155.8" cy="214.7" r="1.0" fill="#b8742e"/><circle cx="20.5" cy="124.3" r="1.0" fill="#8a5a2a"/><circle cx="19.1" cy="99.7" r="1.0" fill="#d9a455"/><circle cx="22.4" cy="177.1" r="0.7" fill="#8a5a2a"/><circle cx="16.1" cy="84.6" r="0.9" fill="#c98a3e"/><circle cx="20.4" cy="121.4" r="0.7" fill="#d9a455"/><circle cx="21.3" cy="177.6" r="0.7" fill="#d9a455"/><circle cx="16.1" cy="175.9" r="1.3" fill="#b8742e"/><circle cx="21.0" cy="81.3" r="1.2" fill="#b8742e"/><circle cx="22.9" cy="169.9" r="0.7" fill="#8a5a2a"/><circle cx="23.0" cy="118.5" r="0.9" fill="#d9a455"/><circle cx="17.5" cy="156.7" r="0.6" fill="#8a5a2a"/><circle cx="18.5" cy="72.2" r="0.8" fill="#d9a455"/><circle cx="154.1" cy="78.0" r="1.3" fill="#b8742e"/><circle cx="157.8" cy="83.1" r="0.8" fill="#c98a3e"/><circle cx="157.2" cy="92.7" r="1.1" fill="#8a5a2a"/><circle cx="156.8" cy="154.5" r="1.3" fill="#8a5a2a"/><circle cx="151.2" cy="184.9" r="1.0" fill="#d9a455"/><circle cx="150.7" cy="77.2" r="1.1" fill="#8a5a2a"/><circle cx="157.2" cy="103.6" r="0.6" fill="#c98a3e"/><circle cx="156.4" cy="80.5" r="1.2" fill="#c98a3e"/>
</g>
<rect width="169" height="225.500" filter="url(#pnm)" opacity=".5"/>
<g filter="url(#pb2m)">
<path d="M31 64.800Q84 61.500 141 65Q150 66 150.300 75Q152.500 135 150 189Q149.500 198.500 141 199.500Q84 203.500 32 200Q23.500 199 23 190Q21 130 23 76Q23.500 66 31 64.800z" fill="#232124"/>
<path d="M32 67Q84 63.800 139.500 67Q147.500 68 148 76Q150 135 147.500 186Q147 194.500 139.500 195.500Q84 199 33 196Q25.800 195 25.300 187Q23.500 130 25.300 77Q25.800 68 32 67z" fill="url(#plm)"/>
<path d="M30 66.300Q84 62.800 141 66.300" stroke="#74737a" stroke-width="1.300" fill="none"/>
</g>
<g font-family="'Liberation Sans',sans-serif" fill="#a9a8a8" text-anchor="middle" filter="url(#pb2m)">
<text x="85.700" y="92.300" font-size="6.400" textLength="105" lengthAdjust="spacingAndGlyphs" fill="#989796" style="white-space:pre">ЖИЛА  В  ГОРОДЕ КРОМЫ</text>
<text x="86.600" y="110.700" font-size="13.600" textLength="124" lengthAdjust="spacingAndGlyphs">АГАФЬЯ ИВАНОВНА</text>
<text x="88" y="128" font-size="15" textLength="80.500" lengthAdjust="spacingAndGlyphs">КУРЕНЦОВА</text>
<text x="85.200" y="139.800" font-size="7" textLength="40.500" lengthAdjust="spacingAndGlyphs" style="white-space:pre">1897  Г. Р.</text>
<text x="86.200" y="157" font-size="7.200" textLength="58.500" lengthAdjust="spacingAndGlyphs" font-weight="bold" fill="#a8a7a6">АРЕСТОВАНА</text>
<text x="87" y="171.400" font-size="7.200" textLength="87.300" lengthAdjust="spacingAndGlyphs" font-weight="bold" fill="#a8a7a6" style="white-space:pre">ЗАМУЧЕНА  В 1942 Г.</text>
</g>
</g></svg><svg style="position:absolute;left:0;top:262.0px" width="413" height="48.5" viewBox="0 0 413 48.5" preserveAspectRatio="none">
<defs><linearGradient id="sgt7" x1="0" x2="1" y1="0" y2="0"><stop offset="0" stop-color="#0d6784"/><stop offset=".38" stop-color="#3fb0d2"/><stop offset="1" stop-color="#12799a"/></linearGradient>
<linearGradient id="lgt7" x1="0" x2="1" y1="0" y2="0"><stop offset="0" stop-color="#c3dfea"/><stop offset=".6" stop-color="#d9ebf2"/><stop offset="1" stop-color="#ffffff"/></linearGradient></defs>
<path d="M10 3.200L248 48.500H150z" fill="url(#lgt7)"/>
<path d="M14 5L187 48.500H150z" fill="#050505"/>
<path d="M0 0L152 48.500H0z" fill="url(#sgt7)"/>
</svg></div></div>
<div class="num" style="top:267.3px">8</div><div class="th sl" style="top:267.0px"><div class="in"><div style="position:absolute;left:0;top:119px;width:413px;text-align:center;font-family:'Liberation Sans',sans-serif;font-size:32px;line-height:40px;color:#1d6b7e;transform:scaleX(.9)">Спасибо за внимание!</div><svg style="position:absolute;left:0;top:228px" width="413" height="83" viewBox="0 0 413 83" preserveAspectRatio="none"><defs><linearGradient id="sg8" x1="0" x2="1"><stop offset="0" stop-color="#0d6784"/><stop offset=".45" stop-color="#3fb0d2"/><stop offset="1" stop-color="#0f7292"/></linearGradient></defs><path d="M0 0L413 8V83H0z" fill="#cfe6ef"/><path d="M0 5L413 12V38L0 8z" fill="#050505"/><path d="M0 7L413 40V83H0z" fill="url(#sg8)"/></svg></div></div>
</div>
<div style="position:absolute;left:764.5px;top:63.200px;width:6.500px;height:346.500px;background:#e9e9e9"></div>
<div style="position:absolute;left:765.2px;top:288.3px;width:5.400px;height:36px;background:#fff;border:.5px solid #c9c9c9"></div>
<svg style="position:absolute;left:764.8px;top:64.1px" width="6" height="6" viewBox="0 0 6 6"><rect x=".3" y=".3" width="5.400" height="5.400" fill="#fff" stroke="#b9b9b9" stroke-width=".5"/><path d="M1.800 3.700L3 2.300l1.200 1.400z" fill="#333"/></svg>
<svg style="position:absolute;left:764.8px;top:362.0px" width="6" height="6" viewBox="0 0 6 6"><rect x=".3" y=".3" width="5.400" height="5.400" fill="#fff" stroke="#b9b9b9" stroke-width=".5"/><path d="M1.800 2.300L3 3.700l1.200-1.400z" fill="#333"/></svg>
<div style="position:absolute;left:765.5px;top:368.5px;width:5px;font-size:4.500px;line-height:5.500px;text-align:center;color:#555">▲<br>▼</div>
<div class="sl" style="left:237px;top:71.0px;width:413px;height:310.500px"><div class="ti" style="top:14px">«Камень преткновения» в честь</div><div class="ti" style="top:40px">Агафьи Ивановны <span class="sq">Куренцовой</span></div><div class="bd" style="left:29.500px;top:68.200px;width:186px"><div>На Орловской земле есть еще</div><div>один «Камень преткновения»,</div><div>заложенный в память о</div><div>подвиге главного врача</div><div>Агафьи <span class="sq">Куренцовой</span>,</div><div>расположенный в поселке</div><div>Кромы Орловской области.</div><div>Из-за дальности</div><div>расположения мы с вами туда</div><div>не поедем, однако я покажу</div><div>вам фото данного памятного</div><div>места и немного расскажу о</div><div class="l">подвиге Агафьи <span class="sq">Куренцовой</span>.</div></div><svg style="position:absolute;left:220px;top:63.500px" width="169" height="225.500" viewBox="0 0 169 225.500">
<defs><filter id="pb" x="-5%" y="-5%" width="110%" height="110%"><feGaussianBlur stdDeviation=".7"/></filter><filter id="pb2"><feGaussianBlur stdDeviation=".45"/></filter>
<filter id="pn" x="0" y="0" width="100%" height="100%"><feTurbulence type="fractalNoise" baseFrequency=".6" numOctaves="2" seed="4"/><feColorMatrix values="0 0 0 0 .3  0 0 0 0 .3  0 0 0 0 .27  .9 .9 .9 0 -1.150"/></filter>
<radialGradient id="pl" cx=".45" cy=".4" r=".75"><stop offset="0" stop-color="#4c494c"/><stop offset=".6" stop-color="#403d40"/><stop offset="1" stop-color="#302e30"/></radialGradient>
<clipPath id="pc"><rect width="169" height="225.500"/></clipPath></defs>
<g clip-path="url(#pc)">
<rect width="169" height="225.500" fill="#cdcdc4"/>
<g filter="url(#pb)">
<rect x="-4" y="-4" width="148" height="56" fill="#cecec5"/>
<rect x="142" y="-4" width="13" height="64" fill="#a9a99f"/><rect x="142" y="-4" width="2" height="60" fill="#8e8e84"/>
<rect x="154.500" y="-4" width="20" height="62" fill="#d4d4cc"/>
<rect x="-4" y="49.500" width="146.500" height="7.800" fill="#5b5951"/>
<rect x="-4" y="56.800" width="180" height="8.500" fill="#a29c8b"/>
<path d="M142 56l13-6v10z" fill="#8f8f82"/>
<rect x="-4" y="64" width="19" height="140" fill="#d3d3cb"/>
<rect x="14.600" y="62" width="8" height="142" fill="#74694f"/>
<rect x="149" y="62" width="14.500" height="142" fill="#70734a"/>
<rect x="163" y="64" width="10" height="140" fill="#cfcfc7"/>
<ellipse cx="113.500" cy="57.500" rx="21" ry="7.500" fill="#6b6f47"/><ellipse cx="108" cy="55" rx="9" ry="3.500" fill="#858a5c"/>
<rect x="-4" y="198" width="180" height="9" fill="#7d745c"/>
<rect x="-4" y="204" width="27" height="24" fill="#c6c6bd"/>
<rect x="22" y="202" width="124.500" height="26" fill="#d2d2ca"/>
<rect x="146" y="204" width="26" height="24" fill="#b3ae9d"/>
<rect x="104" y="198" width="14" height="8" fill="#6a6d49"/>
<circle cx="72.3" cy="57.1" r="1.1" fill="#c98a3e"/><circle cx="91.2" cy="56.7" r="1.0" fill="#b8742e"/><circle cx="61.4" cy="59.0" r="0.6" fill="#c98a3e"/><circle cx="80.9" cy="56.4" r="1.0" fill="#b8742e"/><circle cx="84.0" cy="60.1" r="0.6" fill="#8a5a2a"/><circle cx="61.9" cy="57.5" r="1.0" fill="#b8742e"/><circle cx="71.0" cy="57.0" r="0.7" fill="#d9a455"/><circle cx="81.3" cy="60.8" r="0.7" fill="#b8742e"/><circle cx="74.2" cy="59.8" r="0.6" fill="#c98a3e"/><circle cx="83.5" cy="59.5" r="1.0" fill="#d9a455"/><circle cx="77.7" cy="62.5" r="0.9" fill="#b8742e"/><circle cx="90.2" cy="60.9" r="0.8" fill="#d9a455"/><circle cx="80.0" cy="62.1" r="1.1" fill="#d9a455"/><circle cx="83.1" cy="56.5" r="1.0" fill="#b8742e"/><circle cx="160.2" cy="54.1" r="0.9" fill="#c98a3e"/><circle cx="166.8" cy="53.1" r="1.0" fill="#d9a455"/><circle cx="146.9" cy="56.9" r="0.9" fill="#8a5a2a"/><circle cx="138.2" cy="53.3" r="0.8" fill="#c98a3e"/><circle cx="137.9" cy="61.8" r="1.1" fill="#8a5a2a"/><circle cx="145.1" cy="57.4" r="1.1" fill="#c98a3e"/><circle cx="166.1" cy="57.0" r="1.0" fill="#8a5a2a"/><circle cx="137.9" cy="62.8" r="0.7" fill="#b8742e"/><circle cx="148.7" cy="64.8" r="0.9" fill="#b8742e"/><circle cx="150.4" cy="59.7" r="1.2" fill="#8a5a2a"/><circle cx="163.6" cy="55.9" r="0.9" fill="#d9a455"/><circle cx="157.8" cy="57.3" r="0.8" fill="#c98a3e"/><circle cx="141.6" cy="55.2" r="0.8" fill="#8a5a2a"/><circle cx="162.6" cy="54.6" r="0.8" fill="#b8742e"/><circle cx="145.9" cy="16.1" r="1.0" fill="#b8742e"/><circle cx="147.8" cy="19.3" r="1.0" fill="#c98a3e"/><circle cx="146.2" cy="27.2" r="1.3" fill="#8a5a2a"/><circle cx="145.8" cy="16.7" r="0.9" fill="#8a5a2a"/><circle cx="28.1" cy="199.5" r="0.7" fill="#b8742e"/><circle cx="34.3" cy="203.2" r="0.7" fill="#b8742e"/><circle cx="89.8" cy="205.6" r="1.0" fill="#c98a3e"/><circle cx="133.7" cy="203.3" r="0.7" fill="#d9a455"/><circle cx="144.2" cy="203.2" r="0.9" fill="#c98a3e"/><circle cx="130.4" cy="206.0" r="0.9" fill="#8a5a2a"/><circle cx="60.5" cy="200.0" r="1.1" fill="#d9a455"/><circle cx="82.2" cy="203.8" r="1.0" fill="#b8742e"/><circle cx="143.6" cy="202.7" r="0.7" fill="#c98a3e"/><circle cx="118.6" cy="201.1" r="1.1" fill="#c98a3e"/><circle cx="110.5" cy="200.8" r="0.9" fill="#b8742e"/><circle cx="66.2" cy="200.6" r="1.0" fill="#d9a455"/><circle cx="102.7" cy="203.3" r="1.2" fill="#b8742e"/><circle cx="124.8" cy="204.7" r="1.1" fill="#b8742e"/><circle cx="46.0" cy="202.4" r="1.1" fill="#c98a3e"/><circle cx="122.7" cy="202.3" r="0.7" fill="#d9a455"/><circle cx="78.1" cy="205.6" r="1.3" fill="#d9a455"/><circle cx="30.5" cy="199.7" r="0.9" fill="#d9a455"/><circle cx="46.6" cy="203.4" r="1.2" fill="#c98a3e"/><circle cx="82.3" cy="203.6" r="1.2" fill="#c98a3e"/><circle cx="128.5" cy="199.8" r="0.9" fill="#b8742e"/><circle cx="82.1" cy="200.2" r="1.2" fill="#d9a455"/><circle cx="31.3" cy="205.6" r="1.1" fill="#8a5a2a"/><circle cx="72.2" cy="205.6" r="1.1" fill="#b8742e"/><circle cx="149.1" cy="199.2" r="1.0" fill="#8a5a2a"/><circle cx="124.8" cy="200.0" r="1.2" fill="#8a5a2a"/><circle cx="160.5" cy="208.4" r="1.0" fill="#b8742e"/><circle cx="146.5" cy="219.2" r="1.1" fill="#c98a3e"/><circle cx="157.6" cy="222.4" r="0.9" fill="#b8742e"/><circle cx="164.2" cy="205.1" r="0.8" fill="#d9a455"/><circle cx="157.0" cy="218.3" r="0.8" fill="#8a5a2a"/><circle cx="164.4" cy="201.5" r="1.1" fill="#8a5a2a"/><circle cx="160.6" cy="219.6" r="1.0" fill="#b8742e"/><circle cx="157.7" cy="212.6" r="0.6" fill="#8a5a2a"/><circle cx="163.1" cy="214.6" r="1.1" fill="#b8742e"/><circle cx="149.8" cy="211.4" r="1.1" fill="#c98a3e"/><circle cx="153.2" cy="212.4" r="1.0" fill="#c98a3e"/><circle cx="165.4" cy="201.4" r="0.7" fill="#c98a3e"/><circle cx="163.0" cy="212.2" r="1.0" fill="#c98a3e"/><circle cx="155.8" cy="214.7" r="1.0" fill="#b8742e"/><circle cx="20.5" cy="124.3" r="1.0" fill="#8a5a2a"/><circle cx="19.1" cy="99.7" r="1.0" fill="#d9a455"/><circle cx="22.4" cy="177.1" r="0.7" fill="#8a5a2a"/><circle cx="16.1" cy="84.6" r="0.9" fill="#c98a3e"/><circle cx="20.4" cy="121.4" r="0.7" fill="#d9a455"/><circle cx="21.3" cy="177.6" r="0.7" fill="#d9a455"/><circle cx="16.1" cy="175.9" r="1.3" fill="#b8742e"/><circle cx="21.0" cy="81.3" r="1.2" fill="#b8742e"/><circle cx="22.9" cy="169.9" r="0.7" fill="#8a5a2a"/><circle cx="23.0" cy="118.5" r="0.9" fill="#d9a455"/><circle cx="17.5" cy="156.7" r="0.6" fill="#8a5a2a"/><circle cx="18.5" cy="72.2" r="0.8" fill="#d9a455"/><circle cx="154.1" cy="78.0" r="1.3" fill="#b8742e"/><circle cx="157.8" cy="83.1" r="0.8" fill="#c98a3e"/><circle cx="157.2" cy="92.7" r="1.1" fill="#8a5a2a"/><circle cx="156.8" cy="154.5" r="1.3" fill="#8a5a2a"/><circle cx="151.2" cy="184.9" r="1.0" fill="#d9a455"/><circle cx="150.7" cy="77.2" r="1.1" fill="#8a5a2a"/><circle cx="157.2" cy="103.6" r="0.6" fill="#c98a3e"/><circle cx="156.4" cy="80.5" r="1.2" fill="#c98a3e"/>
</g>
<rect width="169" height="225.500" filter="url(#pn)" opacity=".5"/>
<g filter="url(#pb2)">
<path d="M31 64.800Q84 61.500 141 65Q150 66 150.300 75Q152.500 135 150 189Q149.500 198.500 141 199.500Q84 203.500 32 200Q23.500 199 23 190Q21 130 23 76Q23.500 66 31 64.800z" fill="#232124"/>
<path d="M32 67Q84 63.800 139.500 67Q147.500 68 148 76Q150 135 147.500 186Q147 194.500 139.500 195.500Q84 199 33 196Q25.800 195 25.300 187Q23.500 130 25.300 77Q25.800 68 32 67z" fill="url(#pl)"/>
<path d="M30 66.300Q84 62.800 141 66.300" stroke="#74737a" stroke-width="1.300" fill="none"/>
</g>
<g font-family="'Liberation Sans',sans-serif" fill="#a9a8a8" text-anchor="middle" filter="url(#pb2)">
<text x="85.700" y="92.300" font-size="6.400" textLength="105" lengthAdjust="spacingAndGlyphs" fill="#989796" style="white-space:pre">ЖИЛА  В  ГОРОДЕ КРОМЫ</text>
<text x="86.600" y="110.700" font-size="13.600" textLength="124" lengthAdjust="spacingAndGlyphs">АГАФЬЯ ИВАНОВНА</text>
<text x="88" y="128" font-size="15" textLength="80.500" lengthAdjust="spacingAndGlyphs">КУРЕНЦОВА</text>
<text x="85.200" y="139.800" font-size="7" textLength="40.500" lengthAdjust="spacingAndGlyphs" style="white-space:pre">1897  Г. Р.</text>
<text x="86.200" y="157" font-size="7.200" textLength="58.500" lengthAdjust="spacingAndGlyphs" font-weight="bold" fill="#a8a7a6">АРЕСТОВАНА</text>
<text x="87" y="171.400" font-size="7.200" textLength="87.300" lengthAdjust="spacingAndGlyphs" font-weight="bold" fill="#a8a7a6" style="white-space:pre">ЗАМУЧЕНА  В 1942 Г.</text>
</g>
</g></svg><svg style="position:absolute;left:0;top:262.0px" width="413" height="48.5" viewBox="0 0 413 48.5" preserveAspectRatio="none">
<defs><linearGradient id="sgm" x1="0" x2="1" y1="0" y2="0"><stop offset="0" stop-color="#0d6784"/><stop offset=".38" stop-color="#3fb0d2"/><stop offset="1" stop-color="#12799a"/></linearGradient>
<linearGradient id="lgm" x1="0" x2="1" y1="0" y2="0"><stop offset="0" stop-color="#c3dfea"/><stop offset=".6" stop-color="#d9ebf2"/><stop offset="1" stop-color="#ffffff"/></linearGradient></defs>
<path d="M10 3.200L248 48.500H150z" fill="url(#lgm)"/>
<path d="M14 5L187 48.500H150z" fill="#050505"/>
<path d="M0 0L152 48.500H0z" fill="url(#sgm)"/>
</svg></div>
<div style="position:absolute;left:119.5px;top:389.5px;width:645px;height:20.500px;background:#f2f2f2;border-top:.6px solid #cfcfcf"></div>
<div class="t rg" style="left:126px;top:393.23px;font-size:5.8px;line-height:7.54px;transform:scaleX(1.013);color:#9a9896;">Щелкните, чтобы добавить заметки</div>
<div class="t" style="left:559.5px;top:380.80px;font-size:8px;line-height:10.4px;transform:scaleX(0.997);color:#c9c9c9;">Активация Windows</div>
<div class="t" style="left:559.5px;top:390.86px;font-size:5.6px;line-height:7.28px;transform:scaleX(1.073);color:#cdcdcd;">Чтобы активировать Windows, перейдите в раздел "Параметры".</div>
<div style="position:absolute;left:0;top:409.8px;width:771px;height:9px;background:#f3f2f1;border-top:.5px solid #d6d6d6"></div>
<div class="t st" style="left:4.6px;top:410.85px;font-size:5px;line-height:6.5px;transform:scaleX(0.885);">Слайд 7 из 8</div>
<div class="t st" style="left:50.4px;top:410.85px;font-size:5px;line-height:6.5px;transform:scaleX(0.925);">русский</div>
<div class="t st" style="left:82px;top:410.85px;font-size:5px;line-height:6.5px;font-weight:bold;transform:scaleX(0.888);color:#1f1f1f;">Специальные возможности: проверьте рекомендации</div>
<svg style="position:absolute;left:38.5px;top:411.0px" width="46" height="7" viewBox="0 0 46 7"><g fill="none" stroke="#5a5856" stroke-width=".5"><rect x=".5" y="1" width="4" height="4"/><path d="M2 3l1 1 2.500-3"/><circle cx="38.500" cy="3" r="1.800"/><path d="M39.800 4.400l1.800 1.800M36.500 1.200l4.500 4.500"/></g></svg>
<div class="t st" style="left:556px;top:410.85px;font-size:5px;line-height:6.5px;transform:scaleX(0.863);">Заметки</div>
<div class="t st" style="left:589px;top:410.85px;font-size:5px;line-height:6.5px;transform:scaleX(0.935);">Примечания</div>
<svg style="position:absolute;left:547px;top:410.6px" width="224" height="7.500" viewBox="0 0 224 7.500"><rect x="77" y="0" width="15.500" height="7.500" fill="#d4d2d0"/><g fill="none" stroke="#5a5856" stroke-width=".55"><path d="M4 1.500l-1.500 3h3zM2.500 5.800h3"/><path d="M82.300 2h4.400v3.400h-4.400zM82.300 3.200h4.400"/><path d="M98.500 1.800h2v1.500h-2zM101.500 1.800h2v1.500h-2zM98.500 4.300h2v1.500h-2zM101.500 4.300h2v1.500h-2z"/><path d="M114 1.600c1-.5 2-.5 3 0v3.800c-1-.5-2-.5-3 0zM117 1.600c1-.5 2-.5 3 0v3.800c-1-.5-2-.5-3 0z"/><path d="M130 1.500h5M130.800 2.500h3.400l-1.700 3z"/><path d="M143.800 3.700h2.500M149 3.700h39.500M191.200 3.700h2.600M192.500 2.400v2.600" stroke="#6a6866"/><rect x="216.400" y="1.300" width="4.800" height="4.800"/><path d="M217.400 3.700h2.800M218.800 2.300v2.800"/></g><path d="M35 1.400h5v3.200h-3l-1 1v-1h-1z" fill="#3b3a39"/><rect x="168.200" y=".9" width="1.600" height="5.600" fill="#3b3a39"/></svg>
<div class="t st" style="left:746px;top:410.85px;font-size:5px;line-height:6.5px;transform:scaleX(0.811);">108 %</div>
<div style="position:absolute;left:0;top:418.5px;width:771px;height:17px;background:linear-gradient(90deg,#1d1d1f 0%,#1f1e1e 22%,#2a2420 40%,#2b261d 55%,#2a281a 70%,#3a3a28 86%,#333324 100%)"></div>
<svg style="position:absolute;left:3.9px;top:420.8px" width="11" height="11" viewBox="0 0 11 11"><path d="M1.500 2.300l3.400-.5v3.300H1.500zM5.500 1.700l4-.6v4H5.500zM1.500 5.700h3.400V9l-3.400-.5zM5.500 5.700h4v4l-4-.6z" fill="#f3f3f3"/></svg>
<svg style="position:absolute;left:24.5px;top:420.8px" width="11" height="11" viewBox="0 0 11 11"><circle cx="5.500" cy="5.500" r="4.300" fill="#1a8fd8"/><path d="M1.500 6.500a4.200 4.200 0 0 1 8-2c-1.500-1.300-4.500-.8-4.700 1.200 1.500-.6 3.700-.2 4.300 1.200-1 2.300-4.200 3.200-6.300 1.600-.8-.6-1.200-1.300-1.300-2z" fill="#3ddc9a" fill-opacity=".85"/><path d="M4.800 5.700c-.2 1.600 1 3 2.800 2.800-1.800 1-4 .3-4.500-1.600 0-.7.800-1.300 1.700-1.200z" fill="#0b5ea8"/></svg>
<div style="position:absolute;left:158.5px;top:418.5px;width:18.500px;height:16px;background:#4a4846"></div>
<svg style="position:absolute;left:43.9px;top:420.8px" width="11" height="11" viewBox="0 0 11 11"><path d="M1 2.800h3.400l.9 1H10v5.400H1z" fill="#f6c445"/><path d="M1 4.600h9v4.600H1z" fill="#fbdc74"/><path d="M2.500 6.500h6v2.700h-6z" fill="#3a96dd"/></svg>
<svg style="position:absolute;left:63.1px;top:420.8px" width="11" height="11" viewBox="0 0 11 11"><path d="M1.500 3.300h8l-.5 6.200h-7z" fill="#f3f3f3"/><path d="M3.800 3.300V2.400a1.700 1.700 0 0 1 3.400 0v.9" fill="none" stroke="#ddd" stroke-width=".7"/><rect x="3.400" y="4.600" width="1.900" height="1.900" fill="#f25022"/><rect x="5.700" y="4.600" width="1.900" height="1.900" fill="#7fba00"/><rect x="3.400" y="6.900" width="1.900" height="1.900" fill="#00a4ef"/><rect x="5.700" y="6.900" width="1.900" height="1.900" fill="#ffb900"/></svg>
<svg style="position:absolute;left:83.1px;top:420.8px" width="11" height="11" viewBox="0 0 11 11"><rect x="3.400" y="1.600" width="6.600" height="7.800" rx=".7" fill="#28a8ea"/><path d="M3.400 5.600h6.600v3.100a.7.700 0 0 1-.7.700H3.400z" fill="#0f6cbd"/><rect x=".8" y="3" width="5.400" height="5.400" rx=".7" fill="#0f78d4"/><circle cx="3.500" cy="5.700" r="1.500" fill="none" stroke="#fff" stroke-width=".8"/></svg>
<svg style="position:absolute;left:103.1px;top:420.8px" width="11" height="11" viewBox="0 0 11 11"><circle cx="5.500" cy="5.700" r="4.300" fill="#ff9a1f"/><path d="M1.600 4c.8-2 3-3 5-2.600C5 2 4.600 3 5 4c1 .2 1.800 1 1.600 2.200C6.400 7.500 5 8 4 7.400c1.800 1.800 5 .6 5.400-2 .5 2.600-1.400 4.800-4 4.800-2.800 0-4.800-2.600-3.800-6.200z" fill="#e8344e"/><circle cx="5.600" cy="5.800" r="1.700" fill="#7a3fd8"/></svg>
<svg style="position:absolute;left:122.5px;top:420.8px" width="11" height="11" viewBox="0 0 11 11"><circle cx="5.500" cy="5.500" r="4.500" fill="#f6f6f6"/><path d="M3 2.800l2.500 3.400v2.600M8 2.800L5.500 6.200" fill="none" stroke="#e8362a" stroke-width="1.100" stroke-linecap="round"/></svg>
<svg style="position:absolute;left:142.1px;top:420.8px" width="11" height="11" viewBox="0 0 11 11"><rect x="3.600" y="1.400" width="6.400" height="8.200" rx=".6" fill="#41a5ee"/><path d="M3.600 5.500h6.400v3.500a.6.600 0 0 1-.6.600H3.600z" fill="#185abd"/><path d="M3.600 3.400h6.400v2.100H3.600z" fill="#2b7cd3"/><rect x=".8" y="3" width="5.400" height="5.400" rx=".6" fill="#185abd"/><path d="M1.900 4.300l.8 3 .8-2.600.8 2.600.8-3" fill="none" stroke="#fff" stroke-width=".6"/></svg>
<svg style="position:absolute;left:161.9px;top:420.8px" width="11" height="11" viewBox="0 0 11 11"><circle cx="6" cy="5.500" r="4.200" fill="#ed6c47"/><path d="M6 1.300a4.200 4.200 0 0 1 4.200 4.200H6z" fill="#ff8f6b"/><path d="M6 9.700a4.200 4.200 0 0 0 4.200-4.200H6z" fill="#d35230"/><rect x=".8" y="3" width="5.400" height="5.400" rx=".6" fill="#c43e1c"/><path d="M2.700 7.200V4.200h1.200a1 1 0 0 1 0 2H2.700" fill="none" stroke="#fff" stroke-width=".7"/></svg>
<div style="position:absolute;left:42px;top:433.1px;width:15px;height:1px;background:#76b9ed"></div>
<div style="position:absolute;left:121px;top:433.1px;width:15px;height:1px;background:#76b9ed"></div>
<div style="position:absolute;left:140.5px;top:433.1px;width:14.5px;height:1px;background:#76b9ed"></div>
<div style="position:absolute;left:158.5px;top:433.1px;width:18.5px;height:1px;background:#76b9ed"></div>
<svg style="position:absolute;left:671px;top:421.0px" width="50" height="11" viewBox="0 0 50 11"><g fill="none" stroke="#e8e8e8" stroke-width=".7"><path d="M2 6.500l2-2 2 2"/><path d="M11.200 6a1.800 1.800 0 0 0 3.600 0M13 7.800v1.400"/><path d="M19.500 3h5v3.600h-5zM19.500 3v5.500M21 8.500h3"/><path d="M30 4.500v2.200h1l1.400 1.200V3.300L31 4.500zM33.600 4a2.400 2.400 0 0 1 0 3.200M34.800 3.200a3.600 3.600 0 0 1 0 4.800"/></g><rect x="12" y="2" width="2" height="5" rx="1" fill="#e8e8e8"/></svg>
<div class="t" style="left:712px;top:423.31px;font-size:4.6px;line-height:5.98px;font-weight:bold;transform:scaleX(0.853);color:#eee;">ENG</div>
<div class="t" style="left:731.5px;top:419.81px;font-size:4.6px;line-height:5.98px;transform:scaleX(0.912);color:#eee;">12:21</div>
<div class="t" style="left:725.5px;top:427.01px;font-size:4.6px;line-height:5.98px;transform:scaleX(0.956);color:#eee;">28.01.2025</div>
<svg style="position:absolute;left:754.5px;top:422.0px" width="7" height="7" viewBox="0 0 7 7"><path d="M.6.800h5.800v4H3.200L2 6V4.800H.6z" fill="#e8e8e8"/><path d="M1.600 2h3.800M1.600 3.200h3.800" stroke="#333" stroke-width=".5"/></svg>
<div style="position:absolute;left:259.5px;top:398.8px;width:252.500px;height:19px;background:#fff;border:.5px solid #dcdcdc;box-shadow:0 0 2px rgba(0,0,0,.25)"></div>
<div style="position:absolute;left:263.6px;top:406.0px;width:1.400px;height:4px;background:#c9c9c9"></div>
<div class="t" style="left:269.5px;top:404.75px;font-size:5px;line-height:6.5px;transform:scaleX(0.977);color:#5f6368;">Приложению telemost.yandex.ru предоставлен доступ к вашему экрану.</div>
<div style="position:absolute;left:435.8px;top:401.1px;width:51.400px;height:13.600px;border-radius:1.500px;background:#1a63d6"></div>
<div class="t" style="left:442.5px;top:404.49px;font-size:5.4px;line-height:7.02px;font-weight:bold;transform:scaleX(0.880);color:#fff;">Закрыть доступ</div>
<div class="t" style="left:491px;top:404.62px;font-size:5.2px;line-height:6.76px;transform:scaleX(0.935);color:#2a6fd6;">Скрыть</div></div><!--endshare-->

<div class="cb" style="left:5px;width:33px"><svg viewBox="0 0 14 14" width="14" height="14" style="left:9.500px;top:9.500px"><g fill="none" stroke="#f1eff4" stroke-width="1.600" stroke-linecap="round"><path d="M6 4.700l1.600-1.600a2.350 2.350 0 0 1 3.300 3.300L9.300 8"/><path d="M8 9.300L6.400 10.900a2.350 2.350 0 0 1-3.300-3.300L4.700 6"/><path d="M5.600 8.400l2.800-2.800"/></g></svg></div>
<div class="cb" style="left:43px;width:33px"><svg viewBox="0 0 12 14" width="12" height="14" style="left:10.500px;top:9.500px"><path d="M6 1a2 2 0 0 1 2 2v3.400a2 2 0 0 1-4 0V3a2 2 0 0 1 2-2z" fill="#f1eff4"/><path d="M2.300 6.200a3.700 3.700 0 0 0 7.400 0M6 10v2.500" fill="none" stroke="#f1eff4" stroke-width="1.200" stroke-linecap="round"/><path d="M1.600 1.600l9 11" stroke="#1c1826" stroke-width="2.600"/><path d="M1.800 1.300l8.800 11" stroke="#f1eff4" stroke-width="1.200" stroke-linecap="round"/></svg></div>
<div class="cb" style="left:81px;width:33.500px"><svg viewBox="0 0 16 12" width="15" height="11.500" style="left:9.500px;top:11px"><path d="M1.200 1.500h8.600a.7.700 0 0 1 .7.700v1.700l3.700-2v8.200l-3.700-2v1.700a.7.700 0 0 1-.7.700H1.200a.7.700 0 0 1-.7-.7V2.200a.7.700 0 0 1 .7-.7z" fill="#f1eff4"/><path d="M1.500.6l11 11" stroke="#1c1826" stroke-width="1.500"/></svg></div>
<div class="cb" style="left:215px;width:33px"><svg viewBox="0 0 14 16" width="12.500" height="14.500" style="left:10.500px;top:8.500px"><path d="M3.200 8.600V3.300a.9.900 0 0 1 1.800 0V7h.3V1.800a.9.900 0 0 1 1.800 0V7h.3V2.400a.9.900 0 0 1 1.800 0V7.600h.3V4.200a.85.850 0 0 1 1.700 0v6.200c0 3-1.900 4.800-4.600 4.800-2 0-3.200-.9-4.200-2.700L.7 9.600c-.3-.6-.1-1.100.3-1.400.5-.3 1.100-.1 1.500.4z" fill="#f1eff4"/></svg></div>
<div class="cb" style="left:253px;width:96px"><svg viewBox="0 0 14 11" width="13" height="10" style="left:11px;top:11.500px"><path d="M1 .8h12v7.400H1z M0 9.600h14v1H0z" fill="#4a4653"/><path d="M3.400 6.800c.4-1.600 1.500-2.500 3.300-2.600V2.700l3 2.400-3 2.400V6c-1.400 0-2.400.2-3.300.8z" fill="#1c1826"/></svg><span class="tx" style="left:28px;color:#4a4653;transform:scaleX(.877)">Демонстрация</span></div>
<div class="cb" style="left:353.500px;width:102px"><svg viewBox="0 0 16 12" width="14.500" height="11" style="left:9.500px;top:11px"><circle cx="5.500" cy="3.300" r="2.700" fill="#f1eff4"/><path d="M.5 10.200C.5 7.800 2.700 6.600 5.500 6.600s5 1.200 5 3.600c0 .7-.4 1.100-1.100 1.100H1.600c-.7 0-1.100-.4-1.100-1.100z" fill="#f1eff4"/><circle cx="11.300" cy="3.600" r="2.200" fill="#f1eff4"/><path d="M11.500 6.700c2.300 0 4 1 4 3.300 0 .8-.4 1.300-1.100 1.300h-2.700c.3-.4.400-.8.400-1.300 0-1.400-.6-2.500-1.700-3.200.3-.1.700-.1 1.100-.1z" fill="#f1eff4"/></svg><span class="tx" style="left:28.300px;color:#f1eff4;transform:scaleX(.86)">Участники</span><div style="position:absolute;left:73.500px;top:9.800px;width:19.500px;height:13.500px;border-radius:7px;background:#2c2735;font-size:8.600px;line-height:13.500px;text-align:center;color:#f1eff4">13</div></div>
<div class="abs" style="left:449.500px;top:563px;width:6.500px;height:6.500px;border-radius:50%;background:#f2575c"></div>
<div class="cb" style="left:460.500px;width:52.500px"><svg viewBox="0 0 14 12" width="13" height="11.500" style="left:10.500px;top:11px"><path d="M1 .6l12.500 5.400L1 11.400l1.700-4.700 6-.7-6-.7z" fill="#f1eff4"/></svg><span class="tx" style="left:28.300px;color:#f1eff4;transform:scaleX(.86)">Чат</span></div>
<div class="cb" style="left:518px;width:33px"><svg viewBox="0 0 14 4" width="13" height="4" style="left:10px;top:14.800px"><circle cx="2" cy="2" r="1.400" fill="#f1eff4"/><circle cx="7" cy="2" r="1.400" fill="#f1eff4"/><circle cx="12" cy="2" r="1.400" fill="#f1eff4"/></svg></div>
<div class="cb" style="left:743px;width:33px;background:#470510"><svg viewBox="0 0 16 8" width="15" height="7.500" style="left:9px;top:13.500px"><path d="M8 .6c3.400 0 6 1.100 7.200 2.700.5.700.5 1.600.2 2.600-.2.700-.8 1-1.500.8l-2-.6c-.6-.2-.9-.7-.9-1.300V3.700C10 3.300 9 3.100 8 3.100s-2 .2-3 .6v1.100c0 .6-.3 1.100-.9 1.300l-2 .6c-.7.200-1.300-.1-1.500-.8-.3-1-.3-1.900.2-2.600C2 1.700 4.600.6 8 .6z" fill="#f4eff0"/></svg></div>
<div class="abs" style="left:367px;top:542.500px;width:45.500px;height:13px;border-radius:6.500px;background:#09060f;font-size:8.800px;line-height:13px;color:#f1eff4"><span class="sx" style="position:absolute;left:5px;transform:scaleX(.925)">Victoria L.</span></div>
<div id="panel"><h2>Участники</h2><div class="cnt">13</div><svg viewBox="0 0 8 8" width="7" height="7" style="position:absolute;left:199.500px;top:7.500px"><path d="M1 1l6 6M7 1L1 7" stroke="#c9c5d0" stroke-width="1.200" stroke-linecap="round"/></svg><div class="row" style="top:40.75px"><div class="a g1" style="color:#16300f"><i>ЕП</i></div><div class="n"><span class="sx" style="transform:scaleX(0.925)">Елена Петрухина</span></div><svg class="m" viewBox="0 0 10 11"><path d="M5 .8a1.6 1.6 0 0 1 1.6 1.6v2.7a1.6 1.6 0 0 1-3.2 0V2.400A1.600 1.600 0 0 1 5 .8z" fill="#d9d6de"/><path d="M2 4.900a3 3 0 0 0 6 0M5 8v1.900" fill="none" stroke="#d9d6de" stroke-width="1"/><path d="M1.300 1.300l7.600 8.600" stroke="#1b1724" stroke-width="2.200"/><path d="M1.500 1.100l7.400 8.600" stroke="#d9d6de" stroke-width="1"/></svg></div><div class="row" style="top:76.44px"><div class="a y1" style="color:#33260a"><i>ВМ</i></div><div class="n n2"><span class="sx" style="transform:scaleX(0.944)">ВМНПК "МИФ"</span></div><div class="s">организатор</div><div style="position:absolute;left:169.800px;top:10.500px;width:5.400px;height:5.400px;border-radius:50%;background:#f40a12;box-shadow:0 0 2px 2.500px rgba(190,10,20,.28)"></div><svg class="m" viewBox="0 0 10 11"><path d="M5 .8a1.6 1.6 0 0 1 1.6 1.6v2.7a1.6 1.6 0 0 1-3.2 0V2.400A1.600 1.600 0 0 1 5 .8z" fill="#d9d6de"/><path d="M2 4.900a3 3 0 0 0 6 0M5 8v1.900" fill="none" stroke="#d9d6de" stroke-width="1"/><path d="M1.300 1.300l7.600 8.600" stroke="#1b1724" stroke-width="2.200"/><path d="M1.500 1.100l7.400 8.600" stroke="#d9d6de" stroke-width="1"/></svg></div><div class="row" style="top:112.13px"><div class="a p1" style="color:#fff"><i>СЛ</i></div><div class="n"><span class="sx" style="transform:scaleX(0.921)">Светлана Легостаева</span></div><svg class="m" viewBox="0 0 10 11"><path d="M5 .8a1.6 1.6 0 0 1 1.6 1.6v2.7a1.6 1.6 0 0 1-3.2 0V2.400A1.600 1.600 0 0 1 5 .8z" fill="#d9d6de"/><path d="M2 4.900a3 3 0 0 0 6 0M5 8v1.900" fill="none" stroke="#d9d6de" stroke-width="1"/><path d="M1.300 1.300l7.600 8.600" stroke="#1b1724" stroke-width="2.200"/><path d="M1.500 1.100l7.400 8.600" stroke="#d9d6de" stroke-width="1"/></svg></div><div class="row" style="top:147.82px"><div class="a"><svg viewBox="-1 -1 28.5 28.5" width="28.500" height="28.500" style="position:absolute;left:-1px;top:-1px"><defs><filter id="b1"><feGaussianBlur stdDeviation=".6"/></filter><linearGradient id="g1b" x1="0" x2="1"><stop offset="0" stop-color="#d9ddd9"/><stop offset=".8" stop-color="#e3e7e3"/><stop offset="1" stop-color="#f6f8f6"/></linearGradient></defs><rect x="-1" y="-1" width="28.500" height="28.500" fill="url(#g1b)"/><g filter="url(#b1)"><path d="M7 13c0-5 2.500-8 6-8s6 3 6 8c.3 3 1 6 2.500 9H4.500C6 19 6.800 16 7 13z" fill="#a09280"/><ellipse cx="13" cy="13.400" rx="4" ry="5.200" fill="#d9b5a4"/><ellipse cx="13" cy="16.600" rx="1.100" ry=".5" fill="#b5605e"/><path d="M3 27.500c0-4.500 3.500-7 10-7s10 2.500 10 7z" fill="#6d6964"/><path d="M10 20.800l3 6 3-6z" fill="#e4e8f0"/></g></svg></div><div class="n"><span class="sx" style="transform:scaleX(0.923)">Рудникова Надежда Петров...</span></div><svg class="m" viewBox="0 0 10 11"><path d="M5 .8a1.6 1.6 0 0 1 1.6 1.6v2.7a1.6 1.6 0 0 1-3.2 0V2.400A1.600 1.600 0 0 1 5 .8z" fill="#d9d6de"/><path d="M2 4.900a3 3 0 0 0 6 0M5 8v1.900" fill="none" stroke="#d9d6de" stroke-width="1"/><path d="M1.300 1.300l7.600 8.600" stroke="#1b1724" stroke-width="2.200"/><path d="M1.500 1.100l7.400 8.600" stroke="#d9d6de" stroke-width="1"/></svg></div><div class="row" style="top:183.51px"><div class="a g1"><svg viewBox="0 0 26.5 26.5" width="26.500" height="26.500" style="position:absolute;left:0;top:0"><circle cx="13.250" cy="10.200" r="3.700" fill="#16240f" fill-opacity=".9"/><path d="M6.600 19.300c0-3 3-4.300 6.650-4.300s6.650 1.300 6.650 4.300c0 1.100-.8 1.700-1.800 1.700h-9.700c-1 0-1.800-.6-1.800-1.700z" fill="#16240f" fill-opacity=".9"/></svg></div><div class="n"><span class="sx" style="transform:scaleX(0.911)">Судакова Варвара</span></div><svg class="m" viewBox="0 0 10 11"><path d="M5 .8a1.6 1.6 0 0 1 1.6 1.6v2.7a1.6 1.6 0 0 1-3.2 0V2.400A1.600 1.600 0 0 1 5 .8z" fill="#d9d6de"/><path d="M2 4.900a3 3 0 0 0 6 0M5 8v1.900" fill="none" stroke="#d9d6de" stroke-width="1"/><path d="M1.300 1.300l7.600 8.600" stroke="#1b1724" stroke-width="2.200"/><path d="M1.500 1.100l7.400 8.600" stroke="#d9d6de" stroke-width="1"/></svg></div><div class="row" style="top:219.20px"><div class="a y2"><svg viewBox="0 0 26.5 26.5" width="26.500" height="26.500" style="position:absolute;left:0;top:0"><circle cx="13.250" cy="10.200" r="3.700" fill="#16240f" fill-opacity=".9"/><path d="M6.600 19.300c0-3 3-4.300 6.650-4.300s6.650 1.300 6.650 4.300c0 1.100-.8 1.700-1.800 1.700h-9.700c-1 0-1.800-.6-1.800-1.700z" fill="#16240f" fill-opacity=".9"/></svg></div><div class="n"><span class="sx" style="transform:scaleX(0.914)">Ветрова Мария и Сальнико...</span></div><svg class="m" viewBox="0 0 10 11"><path d="M5 .8a1.6 1.6 0 0 1 1.6 1.6v2.7a1.6 1.6 0 0 1-3.2 0V2.400A1.600 1.600 0 0 1 5 .8z" fill="#d9d6de"/><path d="M2 4.900a3 3 0 0 0 6 0M5 8v1.900" fill="none" stroke="#d9d6de" stroke-width="1"/><path d="M1.300 1.300l7.600 8.600" stroke="#1b1724" stroke-width="2.200"/><path d="M1.500 1.100l7.400 8.600" stroke="#d9d6de" stroke-width="1"/></svg></div><div class="row" style="top:254.89px"><div class="a o1"><svg viewBox="0 0 26.5 26.5" width="26.500" height="26.500" style="position:absolute;left:0;top:0"><circle cx="13.250" cy="10.200" r="3.700" fill="#16240f" fill-opacity=".9"/><path d="M6.600 19.300c0-3 3-4.300 6.650-4.300s6.650 1.300 6.650 4.300c0 1.100-.8 1.700-1.800 1.700h-9.700c-1 0-1.800-.6-1.800-1.700z" fill="#16240f" fill-opacity=".9"/></svg></div><div class="n"><span class="sx" style="transform:scaleX(0.901)">Светлана Васильевна Дереп...</span></div><svg class="m" viewBox="0 0 10 11"><path d="M5 .8a1.6 1.6 0 0 1 1.6 1.6v2.7a1.6 1.6 0 0 1-3.2 0V2.400A1.600 1.600 0 0 1 5 .8z" fill="#d9d6de"/><path d="M2 4.900a3 3 0 0 0 6 0M5 8v1.900" fill="none" stroke="#d9d6de" stroke-width="1"/><path d="M1.300 1.300l7.600 8.600" stroke="#1b1724" stroke-width="2.200"/><path d="M1.500 1.100l7.400 8.600" stroke="#d9d6de" stroke-width="1"/></svg></div><div class="row" style="top:290.58px"><div class="a p1" style="color:#fff"><i>СН</i></div><div class="n"><span class="sx" style="transform:scaleX(0.907)">Соколова Наталья Николаев...</span></div><svg class="m" viewBox="0 0 10 11"><path d="M5 .8a1.6 1.6 0 0 1 1.6 1.6v2.7a1.6 1.6 0 0 1-3.2 0V2.400A1.600 1.600 0 0 1 5 .8z" fill="#d9d6de"/><path d="M2 4.900a3 3 0 0 0 6 0M5 8v1.900" fill="none" stroke="#d9d6de" stroke-width="1"/><path d="M1.300 1.300l7.600 8.600" stroke="#1b1724" stroke-width="2.200"/><path d="M1.500 1.100l7.400 8.600" stroke="#d9d6de" stroke-width="1"/></svg></div><div class="row" style="top:326.27px"><div class="a"><svg viewBox="-1 -1 28.5 28.5" width="28.500" height="28.500" style="position:absolute;left:-1px;top:-1px"><defs><filter id="b2"><feGaussianBlur stdDeviation=".6"/></filter></defs><rect x="-1" y="-1" width="28.500" height="28.500" fill="#060505"/><g filter="url(#b2)"><path d="M8 11c0-5 2.500-8.500 6-8.500s6 3.500 6 8.500c0 1.500.3 3 .6 4H7.500c.3-1 .5-2.500.5-4z" fill="#d6ae7c"/><ellipse cx="13.900" cy="10.300" rx="3.900" ry="5" fill="#e2b494"/><path d="M10 8.700h7.800" stroke="#5a4a44" stroke-width=".9"/><path d="M2 27.500c0-7 3-11.500 11.800-11.500S25.500 20.500 25.500 27.500z" fill="#9a8058"/><path d="M10.800 15.800l3 6 3-6z" fill="#dcac8c"/></g></svg></div><div class="n"><span class="sx" style="transform:scaleX(0.890)">Elena Dudina</span></div><svg class="m" viewBox="0 0 10 11"><path d="M5 .8a1.6 1.6 0 0 1 1.6 1.6v2.7a1.6 1.6 0 0 1-3.2 0V2.400A1.600 1.600 0 0 1 5 .8z" fill="#d9d6de"/><path d="M2 4.900a3 3 0 0 0 6 0M5 8v1.900" fill="none" stroke="#d9d6de" stroke-width="1"/><path d="M1.300 1.300l7.600 8.600" stroke="#1b1724" stroke-width="2.200"/><path d="M1.500 1.100l7.400 8.600" stroke="#d9d6de" stroke-width="1"/></svg></div><div class="row" style="top:361.96px"><div class="a y1" style="color:#33260a"><i>НД</i></div><div class="n"><span class="sx" style="transform:scaleX(0.963)">Никитин Данил</span></div><svg class="m" viewBox="0 0 10 11"><path d="M5 .8a1.6 1.6 0 0 1 1.6 1.6v2.7a1.6 1.6 0 0 1-3.2 0V2.400A1.600 1.600 0 0 1 5 .8z" fill="#d9d6de"/><path d="M2 4.900a3 3 0 0 0 6 0M5 8v1.900" fill="none" stroke="#d9d6de" stroke-width="1"/><path d="M1.300 1.300l7.600 8.600" stroke="#1b1724" stroke-width="2.200"/><path d="M1.500 1.100l7.400 8.600" stroke="#d9d6de" stroke-width="1"/></svg></div><div class="row" style="top:397.65px"><div class="a r1" style="color:#fff"><i>ИБ</i></div><div class="n"><span class="sx" style="transform:scaleX(0.917)">Ирина Андреевна Барановс...</span></div><svg class="m" viewBox="0 0 10 11"><path d="M5 .8a1.6 1.6 0 0 1 1.6 1.6v2.7a1.6 1.6 0 0 1-3.2 0V2.400A1.600 1.600 0 0 1 5 .8z" fill="#d9d6de"/><path d="M2 4.900a3 3 0 0 0 6 0M5 8v1.900" fill="none" stroke="#d9d6de" stroke-width="1"/><path d="M1.300 1.300l7.600 8.600" stroke="#1b1724" stroke-width="2.200"/><path d="M1.500 1.100l7.400 8.600" stroke="#d9d6de" stroke-width="1"/></svg></div><div class="row" style="top:433.34px"><div class="a"><svg viewBox="-1 -1 28.5 28.5" width="28.500" height="28.500" style="position:absolute;left:-1px;top:-1px"><defs><filter id="b3"><feGaussianBlur stdDeviation=".6"/></filter><linearGradient id="g3b" x1="0" x2="1"><stop offset="0" stop-color="#959a68"/><stop offset=".55" stop-color="#7c8656"/><stop offset="1" stop-color="#46563a"/></linearGradient></defs><rect x="-1" y="-1" width="28.500" height="28.500" fill="url(#g3b)"/><g filter="url(#b3)"><path d="M3.500 10c0-5 4-8 9-8s7.500 3 7.500 7c0 2.500-.5 4.500-1.500 6H6c-1.500-1.500-2.500-3-2.500-5z" fill="#2a1a15"/><path d="M9 1.500c3-1.500 7-.5 8.500 2.500 1 2 1 4 .5 5.500-1-3.500-4-6-9-8z" fill="#c8201e"/><ellipse cx="7.200" cy="3.200" rx="1.600" ry="1.100" fill="#d8701e"/><ellipse cx="11.600" cy="13.200" rx="4.400" ry="5" transform="rotate(-18 11.600 13.200)" fill="#e8c9ba"/><path d="M7.500 9.500c2-1.800 5-2 7-1-2 0-4.500.8-6 2.500z" fill="#2a1a15"/><ellipse cx="12.200" cy="17.200" rx="1.100" ry=".6" fill="#c8303a"/><path d="M3 27.500c0-6 3-10 8-11.500 2 1.500 4 1.500 6-.8 5 .8 9.500 5 9.500 12.300z" fill="#eef0f4"/></g></svg></div><div class="n"><span class="sx" style="transform:scaleX(0.940)">Victoria L.</span></div></div><div class="row" style="top:469.03px"><div class="a l1"><svg viewBox="0 0 26.5 26.5" width="26.500" height="26.500" style="position:absolute;left:0;top:0"><circle cx="13.250" cy="10.200" r="3.700" fill="#16240f" fill-opacity=".9"/><path d="M6.600 19.300c0-3 3-4.300 6.650-4.300s6.650 1.300 6.650 4.300c0 1.100-.8 1.700-1.800 1.700h-9.700c-1 0-1.800-.6-1.800-1.700z" fill="#16240f" fill-opacity=".9"/></svg></div><div class="n"><span class="sx" style="transform:scaleX(0.927)">Чекулина Т.А.</span></div><svg class="m" viewBox="0 0 10 11"><path d="M5 .8a1.6 1.6 0 0 1 1.6 1.6v2.7a1.6 1.6 0 0 1-3.2 0V2.400A1.600 1.600 0 0 1 5 .8z" fill="#d9d6de"/><path d="M2 4.900a3 3 0 0 0 6 0M5 8v1.900" fill="none" stroke="#d9d6de" stroke-width="1"/><path d="M1.300 1.300l7.600 8.600" stroke="#1b1724" stroke-width="2.200"/><path d="M1.500 1.100l7.400 8.600" stroke="#d9d6de" stroke-width="1"/></svg></div><div id="copy"><svg viewBox="0 0 14 14" width="14.500" height="14.500" style="position:absolute;left:43.500px;top:5.500px"><g fill="none" stroke="#f1eff4" stroke-width="1.500" stroke-linecap="round"><path d="M6 4.700l1.600-1.600a2.350 2.350 0 0 1 3.300 3.300L9.300 8"/><path d="M8 9.300L6.400 10.900a2.350 2.350 0 0 1-3.300-3.300L4.700 6"/><path d="M5.600 8.400l2.800-2.800"/></g></svg><span class="sx" style="position:absolute;left:66.500px;transform:scaleX(.874)">Скопировать ссылку</span></div></div>
<div id="tb"><div style="position:absolute;left:29.500px;top:1.800px;width:170.500px;height:23px;background:#fff"></div>
<svg style="position:absolute;left:5.30px;top:3.5px" width="18" height="18" viewBox="0 0 18 18"><path d="M4 4.200l4.500-.6v4.900H4zM9.300 3.500l5.200-.7v5.700H9.300zM4 9.300h4.500v4.900L4 13.600zM9.300 9.300h5.200V15l-5.200-.7z" fill="#0a0a0a"/></svg>
<svg style="position:absolute;left:33.50px;top:5.5px" width="14" height="14" viewBox="0 0 14 14"><circle cx="8" cy="6" r="3.500" fill="none" stroke="#1f1f1f" stroke-width="1.200"/><path d="M5.600 8.600L1.800 12.400" stroke="#1f1f1f" stroke-width="1.300" stroke-linecap="round"/></svg>
<div style="position:absolute;left:52.800px;top:5.300px;font-size:9.600px;line-height:14px;color:#555"><span class="sx" style="transform:scaleX(.95)">Поиск</span></div>
<svg style="position:absolute;left:152px;top:1.800px" width="48" height="23" viewBox="0 0 48 23"><defs><filter id="ob" x="-10%" y="-10%" width="120%" height="120%"><feGaussianBlur stdDeviation=".6"/></filter><linearGradient id="og" x1="0" y1="0" x2="0" y2="1"><stop offset="0" stop-color="#1f2f96"/><stop offset=".45" stop-color="#4a55c4"/><stop offset=".8" stop-color="#b59ee4"/><stop offset="1" stop-color="#e6dcf6"/></linearGradient></defs>
<g filter="url(#ob)"><path d="M5 23C2 17 3 11 7 8c1-4 6-6 10-4 3-3 9-3 12-1 4-2 9 0 10 4 5 2 6 9 3 16z" fill="url(#og)"/>
<path d="M3 23c3-4 8-5.500 13-4 4 1.200 8 1 12-.3 6-2 12-1 18 4.300z" fill="#eef0fb"/>
<circle cx="17" cy="6" r=".6" fill="#fff"/><circle cx="22" cy="8.500" r=".6" fill="#fff"/><circle cx="33" cy="5.500" r=".6" fill="#fff"/><circle cx="36" cy="11.500" r=".6" fill="#fff"/><circle cx="12" cy="13" r=".5" fill="#e8d8ff"/><circle cx="27" cy="4.500" r=".5" fill="#fff"/><circle cx="33" cy="16.500" r=".6" fill="#fff"/><circle cx="13" cy="17.500" r=".5" fill="#fff"/>
<path d="M21 15.500C16 11.500 8 9.500 2.500 11c4.500.5 8 2.500 11 4.500 2.500 1.600 5 2 7 1.500z" fill="#f1f1f6"/><path d="M24 14c2-6 8-10 16-11.500-4 2.500-6.500 5.500-8.500 9-2 3-4.500 4.500-7.500 4.500z" fill="#f6f6fa"/>
<ellipse cx="21.800" cy="15.600" rx="3.400" ry="3.300" fill="#efeae2"/><ellipse cx="21.800" cy="16.300" rx="1.700" ry="1.500" fill="#b08c64"/></g>
<circle cx="20.700" cy="15.200" r=".6" fill="#3a2a1a"/><circle cx="23" cy="15.200" r=".6" fill="#3a2a1a"/></svg>
<svg style="position:absolute;left:205.00px;top:3.5px" width="18" height="18" viewBox="0 0 18 18"><g fill="none" stroke="#1f1f1f" stroke-width="1.100"><rect x="5.500" y="5.500" width="6" height="7"/><path d="M4 5.500h2M4 12.500h2M11 5.500h2.500M11 12.500h2.500M14 5v1.500M14 10.500v2.500"/></g><rect x="13.200" y="7.600" width="1.700" height="1.900" fill="#1f1f1f"/></svg>
<svg style="position:absolute;left:235.00px;top:3.5px" width="18" height="18" viewBox="0 0 18 18"><path d="M2 4h5.500l1.500 1.500H16v9H2z" fill="#f0b429"/><path d="M2 6.500h14v8H2z" fill="#fbd35a"/><path d="M4.500 10h9v4.500h-9z" fill="#2f8fe0"/><path d="M6.500 12h5v2.500h-5z" fill="#fbd35a"/></svg>
<svg style="position:absolute;left:265.00px;top:3.5px" width="18" height="18" viewBox="0 0 18 18"><circle cx="9" cy="9" r="7" fill="#1b86d6"/><path d="M2.200 10.500A6.900 6.900 0 0 1 15.600 7c-2.600-2.200-7.600-1.400-8 2 2.600-1 6.200-.4 7.300 2-1.700 4-7 5.400-10.600 2.700-1.300-1-2-2.200-2.100-3.200z" fill="#41d6a0" fill-opacity=".9"/><path d="M7.800 9.300c-.3 2.700 1.700 5 4.700 4.700-3 1.700-6.700.5-7.500-2.700 0-1.200 1.300-2.200 2.800-2z" fill="#0a57a4"/><rect x="5.500" y="10.500" width="5" height="4.500" fill="#e9eef5" fill-opacity=".85"/></svg>
<svg style="position:absolute;left:294.30px;top:3.5px" width="18" height="18" viewBox="0 0 18 18"><circle cx="9" cy="9.500" r="7" fill="#ff9b1f"/><path d="M2.600 7c1.300-3.300 5-4.900 8.200-4.300C8.200 3.700 7.500 5.300 8.200 7c1.600.3 3 1.600 2.600 3.600-.3 2.100-2.600 2.900-4.200 2 3 3 8.200 1 8.800-3.300.8 4.300-2.300 7.900-6.500 7.900-4.600 0-7.900-4.300-6.300-10.200z" fill="#e9334f"/><circle cx="9.200" cy="9.600" r="2.800" fill="#7b3fd9"/><path d="M3 5.500C4 3 6.500 2 8 2.300 6.500 3 6 4 6 5z" fill="#ffd43a"/></svg>
<svg style="position:absolute;left:323.40px;top:3.5px" width="18" height="18" viewBox="0 0 18 18"><ellipse cx="9" cy="9" rx="6.800" ry="7.200" fill="#e01b24"/><ellipse cx="9" cy="9" rx="3" ry="5" fill="#f4ede8"/></svg>
<svg style="position:absolute;left:352.00px;top:3.5px" width="18" height="18" viewBox="0 0 18 18"><circle cx="9" cy="9" r="7.200" fill="#fc3f1d"/><text x="9" y="13" font-family="'Liberation Sans',sans-serif" font-weight="bold" font-size="11" text-anchor="middle" fill="#fff">Я</text></svg>
<svg style="position:absolute;left:381.00px;top:3.5px" width="18" height="18" viewBox="0 0 18 18"><circle cx="9" cy="9" r="7.200" fill="#4caf50"/><path d="M9 9L2.800 5.400A7.200 7.200 0 0 1 15.200 5.400z" fill="#e53935"/><path d="M9 1.800a7.200 7.200 0 0 1 6.240 3.600H9z" fill="#e53935"/><path d="M9 9l6.240-3.600A7.200 7.200 0 0 1 9 16.200z" fill="#fdd835"/><circle cx="9" cy="9" r="3.300" fill="#fff"/><circle cx="9" cy="9" r="2.600" fill="#1e88e5"/></svg>
<svg style="position:absolute;left:410.50px;top:3.5px" width="18" height="18" viewBox="0 0 18 18"><circle cx="8.500" cy="8.500" r="6.800" fill="#2aa3e0"/><path d="M4 8.500l8.500-3.300-1.400 7-2.500-1.900-1.300 1.300-.3-2.300 4-3.600-5 3.100z" fill="#fff"/><circle cx="13.500" cy="13.500" r="3.800" fill="#e53935"/><text x="13.500" y="15.400" font-family="'Liberation Sans',sans-serif" font-weight="bold" font-size="4.800" text-anchor="middle" fill="#fff">78</text></svg>
<svg style="position:absolute;left:440.00px;top:3.5px" width="18" height="18" viewBox="0 0 18 18"><rect x="6" y="2.300" width="10" height="13.400" rx="1" fill="#41a5ee"/><path d="M6 9h10v5.700a1 1 0 0 1-1 1H6z" fill="#185abd"/><path d="M6 5.700h10V9H6z" fill="#2b7cd3"/><rect x="1.500" y="4.800" width="8.600" height="8.600" rx="1" fill="#185abd"/><path d="M3.300 6.800l1.200 4.600 1.300-4 1.300 4 1.200-4.600" fill="none" stroke="#fff" stroke-width="1"/></svg>
<svg style="position:absolute;left:469.00px;top:3.5px" width="18" height="18" viewBox="0 0 18 18"><path d="M9 2a7 7 0 0 1 0 14c-1.300 0-2.500-.3-3.500-.9L2 16l1-3.400A7 7 0 0 1 9 2z" fill="#fff" stroke="#25a244" stroke-width="1.500"/><path d="M6.600 5.800c.4-.4.900-.3 1.100.1l.6 1.300c.1.300 0 .6-.2.800l-.4.400c.6 1.100 1.400 1.900 2.500 2.500l.5-.5c.2-.2.500-.3.800-.1l1.300.7c.4.200.4.700.1 1.100-.6.800-1.500 1-2.500.7-2.300-.8-4-2.600-4.600-4.800-.2-.9.100-1.700.8-2.200z" fill="#25a244"/></svg>
<div style="position:absolute;left:493px;top:0;width:28.500px;height:24.500px;background:#f4f4f6"></div>
<svg style="position:absolute;left:498.00px;top:3.5px" width="18" height="18" viewBox="0 0 18 18"><rect x="2" y="2.500" width="14" height="13" rx="3.200" fill="#1d2228"/><circle cx="7.800" cy="9" r="3.300" fill="none" stroke="#8b9299" stroke-width="1.100"/><circle cx="13.200" cy="9" r="1.200" fill="#3ee04a"/></svg>
<svg style="position:absolute;left:527.00px;top:3.5px" width="18" height="18" viewBox="0 0 18 18"><rect x="2.300" y="2.300" width="13.400" height="13.400" rx="2" fill="#b30b00"/><path d="M4.500 12.500c1.500-.8 3-3 3.800-5.500.3-1.200.3-2.300-.3-2.300-.7 0-.6 1.500 0 2.800.8 1.800 2.600 3.600 4.300 3.900 1 .2 1.400-.4.700-.8-1.200-.6-5.500 0-8.500 1.900z" fill="none" stroke="#fff" stroke-width=".9"/></svg>
<div class="ul" style="left:232.5px;width:22.0px"></div>
<div class="ul" style="left:262px;width:23px"></div>
<div class="ul" style="left:379px;width:21.5px"></div>
<div class="ul" style="left:407.5px;width:23.5px"></div>
<div class="ul" style="left:437px;width:23.5px"></div>
<div class="ul" style="left:466px;width:23.5px"></div>
<div class="ul" style="left:493px;width:28.5px"></div>
<div class="ul" style="left:524.5px;width:23.5px"></div>
<svg style="position:absolute;left:836px;top:5px" width="74" height="14" viewBox="0 0 74 14"><g fill="none" stroke="#1f1f1f" stroke-width="1"><path d="M4 8.500l3-3 3 3"/><path d="M19 7.500a2.600 2.600 0 0 0 5.200 0M21.600 10.100v2"/><path d="M32.500 3.500h7v5h-7zM32.500 3.500v8M34.500 11.500h4.500" stroke-width=".9"/><path d="M46.500 5.700v2.800h1.300l2 1.700V4l-2 1.700zM51.600 4.800a3.200 3.200 0 0 1 0 4.600M53.300 3.600a5 5 0 0 1 0 7" stroke-width=".9"/><rect x="61.500" y="4.500" width="5" height="6.500" rx="1" stroke-width=".9"/><path d="M62 2.600c1.400-.8 2.600-.8 4 0M66.500 7h2" stroke-width=".8"/></g><rect x="20.100" y="1.500" width="3" height="7" rx="1.500" fill="#1f1f1f"/><circle cx="64" cy="7.700" r="1" fill="#1f1f1f"/></svg>
<div style="position:absolute;left:912px;top:6.500px;font-size:8.200px;line-height:11px;color:#111"><span class="sx" style="transform:scaleX(.88)">РУС</span></div>
<div style="position:absolute;left:938.500px;top:1.300px;font-size:8.400px;line-height:10px;color:#111"><span class="sx" style="transform:scaleX(.84)">11:21</span></div>
<div style="position:absolute;left:931px;top:11.600px;font-size:8.400px;line-height:10px;color:#111"><span class="sx" style="transform:scaleX(.82)">28.01.2025</span></div>
<svg style="position:absolute;left:973px;top:4.500px" width="16" height="16" viewBox="0 0 16 16"><path d="M2 1.500h10.500v7.800H7.500L5 11.600V9.300H2z" fill="#1f1f1f"/><path d="M4 4h6.500M4 6.300h6.500" stroke="#e8e8e8" stroke-width=".7"/><circle cx="11.800" cy="11.300" r="3.400" fill="#e9e9ec" stroke="#555" stroke-width=".7"/><text x="11.800" y="13.400" font-family="'Liberation Sans',sans-serif" font-size="6" font-weight="bold" text-anchor="middle" fill="#222">1</text></svg></div><!--endtb-->
</body>
</html>
